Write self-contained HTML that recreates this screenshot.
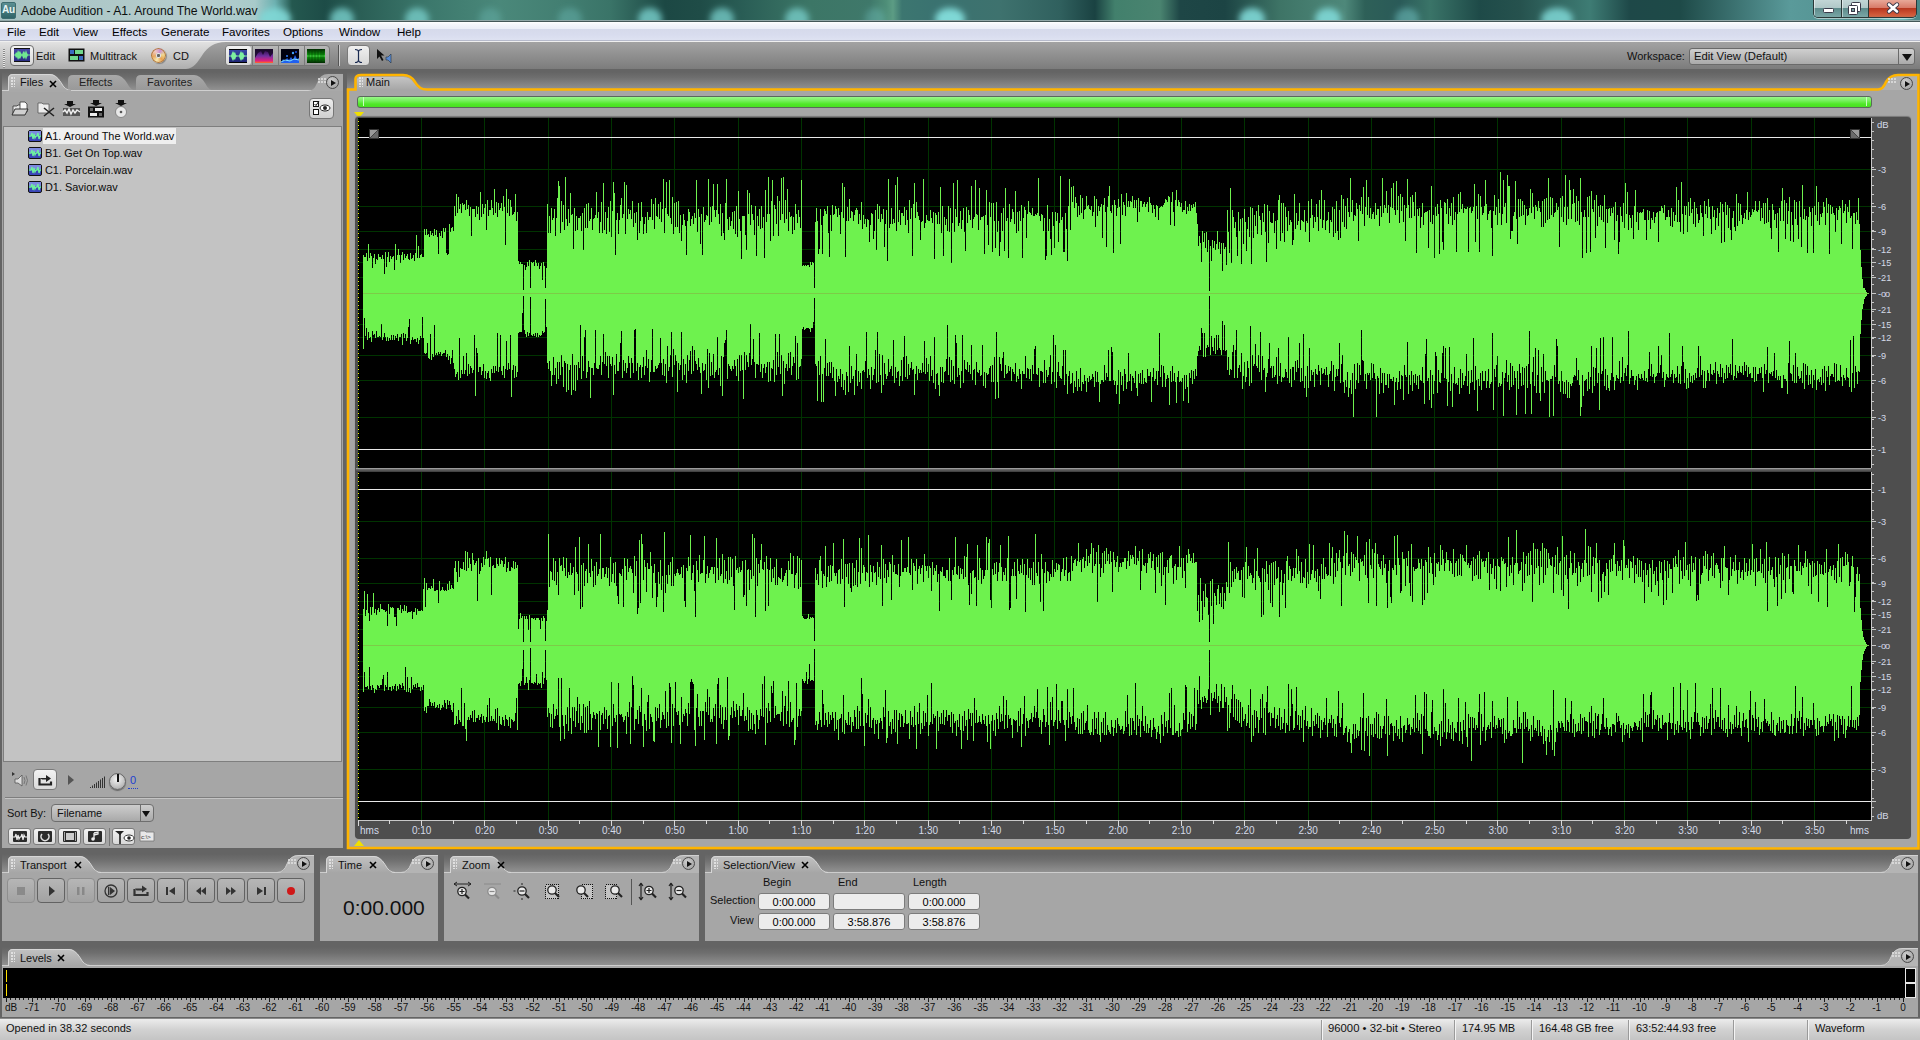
<!DOCTYPE html>
<html><head><meta charset="utf-8">
<style>
*{box-sizing:border-box;margin:0;padding:0}
html,body{width:1920px;height:1040px;overflow:hidden;background:#646464;font-family:"Liberation Sans",sans-serif;font-size:11px;color:#000}
.a{position:absolute}
.t{position:absolute;white-space:nowrap;line-height:1}
#title{left:0;top:0;width:1920px;height:22px;background:#2e6460;overflow:hidden}
#title:after{content:"";position:absolute;left:0;top:20px;width:1920px;height:2px;background:linear-gradient(#b8d0d0,#1e2e2e)}
#menubar{left:0;top:22px;width:1920px;height:19px;background:linear-gradient(#ffffff 0,#f4f5fa 15%,#eceef7 37%,#d6daeb 40%,#d8dcee 70%,#dee2f1 100%);border-bottom:1px solid #b6bacb}
#toolbar{left:0;top:41px;width:1920px;height:28px;background:linear-gradient(#d2d2d2 0,#bdbdbd 45%,#a2a2a2 100%)}
#hdrow1{left:0;top:69px;width:1920px;height:22px;background:linear-gradient(#5d5d5d 0,#6a6a6a 30%,#8c8c8c 100%)}
#hdrow2{left:0;top:849px;width:1920px;height:24px;background:linear-gradient(#636363 0,#656565 20%,#929292 100%)}
#hdrow3{left:0;top:941px;width:1920px;height:25px;background:linear-gradient(#636363 0,#656565 20%,#929292 100%)}
.panel{position:absolute;background:#a6a6a6;border-top:1px solid #cdcdcd}
.tab{position:absolute;height:17px;background:linear-gradient(#bcbcbc,#a8a8a8);border-radius:5px 10px 0 0}
.grip{position:absolute;width:4px;height:10px;background:radial-gradient(circle at 1px 1px,#e0e0e0 0.8px,transparent 1.2px) 0 0/3px 3px}
.x{position:absolute;font-size:10px;font-weight:bold}
.pmenu{position:absolute;width:13px;height:13px;border-radius:50%;border:1px solid #4a4a4a;background:radial-gradient(circle at 40% 35%,#d0d0d0,#9a9a9a)}
.pmenu:after{content:"";position:absolute;left:4px;top:2.5px;border-left:5px solid #111;border-top:3.5px solid transparent;border-bottom:3.5px solid transparent}
.btn{position:absolute;border:1px solid #6f6f6f;border-radius:4px;background:linear-gradient(#bdbdbd,#a3a3a3)}
.ibox{position:absolute;height:16px;background:#ececec;border:1px solid #7b7b7b;border-radius:3px;text-align:center;font-size:11px;line-height:14px}
</style></head><body>
<!-- TITLE -->
<div id="title" class="a">
<svg class="a" style="left:0;top:0" width="1920" height="22"><defs><linearGradient id="tbg" x1="0" y1="0" x2="1" y2="0"><stop offset="0.0000" stop-color="#a6c2c2"/><stop offset="0.1042" stop-color="#b6cece"/><stop offset="0.1328" stop-color="#a8caca"/><stop offset="0.1432" stop-color="#6cb0b0"/><stop offset="0.1521" stop-color="#24584f"/><stop offset="0.1693" stop-color="#1d4c47"/><stop offset="0.1875" stop-color="#2a5e55"/><stop offset="0.2240" stop-color="#3c786c"/><stop offset="0.2604" stop-color="#4a887a"/><stop offset="0.2917" stop-color="#437f72"/><stop offset="0.3177" stop-color="#3a7468"/><stop offset="0.3464" stop-color="#1c4844"/><stop offset="0.3646" stop-color="#1f4c47"/><stop offset="0.3880" stop-color="#2a5e56"/><stop offset="0.4219" stop-color="#3c7666"/><stop offset="0.4531" stop-color="#3f786a"/><stop offset="0.4615" stop-color="#4e8e78"/><stop offset="0.4651" stop-color="#5c9c84"/><stop offset="0.4698" stop-color="#3c7670"/><stop offset="0.4870" stop-color="#3a7270"/><stop offset="0.5208" stop-color="#3e726e"/><stop offset="0.5521" stop-color="#30605e"/><stop offset="0.5703" stop-color="#1a4242"/><stop offset="0.5807" stop-color="#42806c"/><stop offset="0.6042" stop-color="#4a8470"/><stop offset="0.6146" stop-color="#1e4646"/><stop offset="0.6380" stop-color="#1c4444"/><stop offset="0.6667" stop-color="#3e7466"/><stop offset="0.7005" stop-color="#4e887a"/><stop offset="0.7109" stop-color="#2e6058"/><stop offset="0.7292" stop-color="#2a5a58"/><stop offset="0.7448" stop-color="#3a7468"/><stop offset="0.7708" stop-color="#1e4a48"/><stop offset="0.7917" stop-color="#26524e"/><stop offset="0.8281" stop-color="#3e7c74"/><stop offset="0.8490" stop-color="#1e4848"/><stop offset="0.8750" stop-color="#1e4a48"/><stop offset="0.9323" stop-color="#5a9a9a"/><stop offset="1.0000" stop-color="#4a8888"/></linearGradient><filter id="tblur" x="-5%" y="-50%" width="110%" height="200%"><feGaussianBlur stdDeviation="3.2"/></filter></defs><rect width="1920" height="22" fill="url(#tbg)"/><g filter="url(#tblur)"><ellipse cx="275" cy="19" rx="16" ry="11" fill="#7fd8d6" opacity="0.9"/><ellipse cx="342" cy="19" rx="12" ry="11" fill="#7fd8d6" opacity="0.75"/><ellipse cx="417" cy="19" rx="12" ry="11" fill="#7fd8d6" opacity="0.7"/><ellipse cx="490" cy="19" rx="11" ry="11" fill="#7fd8d6" opacity="0.25"/><ellipse cx="570" cy="19" rx="12" ry="11" fill="#7fd8d6" opacity="0.3"/><ellipse cx="650" cy="19" rx="12" ry="11" fill="#7fd8d6" opacity="0.75"/><ellipse cx="722" cy="19" rx="12" ry="11" fill="#7fd8d6" opacity="0.7"/><ellipse cx="797" cy="19" rx="12" ry="11" fill="#7fd8d6" opacity="0.7"/><ellipse cx="875" cy="19" rx="10" ry="11" fill="#7fd8d6" opacity="0.3"/><ellipse cx="950" cy="19" rx="15" ry="11" fill="#7fd8d6" opacity="1.0"/><ellipse cx="1252" cy="19" rx="13" ry="11" fill="#7fd8d6" opacity="0.9"/><ellipse cx="1328" cy="19" rx="13" ry="11" fill="#7fd8d6" opacity="0.9"/><ellipse cx="1407" cy="19" rx="12" ry="11" fill="#7fd8d6" opacity="0.45"/><ellipse cx="1557" cy="19" rx="16" ry="11" fill="#7fd8d6" opacity="0.85"/><ellipse cx="1895" cy="19" rx="14" ry="11" fill="#7fd8d6" opacity="0.6"/></g></svg>
 <div class="a" style="left:1px;top:2px;width:15px;height:17px;background:linear-gradient(#5b8f92,#2f6468);border:1px solid #3d6c70;border-radius:2px"></div>
 <div class="t" style="left:2px;top:5px;font-size:10px;color:#e8f4f4;font-weight:bold;letter-spacing:-0.3px">Au</div>
 <div class="t" style="left:21px;top:5px;font-size:12.2px;color:#0c1010">Adobe Audition - A1. Around The World.wav</div>
 <div class="a" style="left:1813px;top:0;width:104px;height:18px;border:1px solid #2a3838;border-top:0;border-radius:0 0 5px 5px;overflow:hidden;box-shadow:0 1px 0 rgba(255,255,255,.5)">
  <div class="a" style="left:0;top:0;width:28px;height:17px;background:linear-gradient(#c2d6d6 0,#b0c8c8 45%,#5e8c8c 50%,#7aa6a6 100%);border-right:1px solid #2a3838;box-shadow:inset 1px 0 0 rgba(255,255,255,.5)"></div>
  <div class="a" style="left:28px;top:0;width:27px;height:17px;background:linear-gradient(#c2d6d6 0,#b0c8c8 45%,#5e8c8c 50%,#7aa6a6 100%);border-right:1px solid #2a3838;box-shadow:inset 1px 0 0 rgba(255,255,255,.5)"></div>
  <div class="a" style="left:55px;top:0;width:49px;height:17px;background:linear-gradient(#e8a898 0,#d87a68 45%,#b83820 50%,#d05838 85%,#c86848 100%)"></div>
  <svg class="a" style="left:0;top:0" width="104" height="17">
   <rect x="9.5" y="8.5" width="10" height="4" rx="1" fill="#fff" stroke="#3a3a4a"/>
   <rect x="37.5" y="2.5" width="9" height="9" rx="1" fill="#fff" stroke="#3a3a4a"/>
   <rect x="34.5" y="5.5" width="9" height="9" rx="1" fill="#fff" stroke="#3a3a4a"/>
   <rect x="37.5" y="8.5" width="3" height="3" fill="#7aa0a0" stroke="#3a3a4a"/>
   <path d="M75 4.5L83 11.5M83 4.5L75 11.5" stroke="#3a3a4a" stroke-width="4.4" stroke-linecap="round"/>
   <path d="M75 4.5L83 11.5M83 4.5L75 11.5" stroke="#fff" stroke-width="2.6" stroke-linecap="round"/>
  </svg>
 </div>
</div>
<!-- MENU -->
<div id="menubar" class="a">
 <div class="t" style="left:7px;top:4px;font-size:11.6px">File</div>
 <div class="t" style="left:39px;top:4px;font-size:11.6px">Edit</div>
 <div class="t" style="left:73px;top:4px;font-size:11.6px">View</div>
 <div class="t" style="left:112px;top:4px;font-size:11.6px">Effects</div>
 <div class="t" style="left:161px;top:4px;font-size:11.6px">Generate</div>
 <div class="t" style="left:222px;top:4px;font-size:11.6px">Favorites</div>
 <div class="t" style="left:283px;top:4px;font-size:11.6px">Options</div>
 <div class="t" style="left:339px;top:4px;font-size:11.6px">Window</div>
 <div class="t" style="left:397px;top:4px;font-size:11.6px">Help</div>
</div>
<!-- TOOLBAR -->
<div id="toolbar" class="a">
<svg class="a" style="left:0;top:0" width="1920" height="28"><defs><linearGradient id="tbl" x1="0" y1="0" x2="0" y2="1"><stop offset="0" stop-color="#e2e2e2"/><stop offset="1" stop-color="#aeaeae"/></linearGradient><linearGradient id="tbd" x1="0" y1="0" x2="0" y2="1"><stop offset="0" stop-color="#a4a4a4"/><stop offset="1" stop-color="#7c7c7c"/></linearGradient></defs><rect x="0" y="0" width="1920" height="28" fill="url(#tbd)"/><path d="M0 1H226C214 1 208 6 203 13C197 22 194 27 186 28H0Z" fill="url(#tbl)"/><rect x="0" y="0" width="1920" height="1" fill="#efefef"/></svg>
<div class="a" style="left:3px;top:8px;width:2px;height:19px;background:repeating-linear-gradient(#8a8a8a 0 1px,#e8e8e8 1px 2px)"></div>
<div class="a" style="left:10px;top:4px;width:24px;height:21px;border:1px solid #6d6d6d;border-radius:4px;background:linear-gradient(#f4f4f4,#d8d8d8)"></div>
<svg class="a" style="left:14px;top:7px" width="16" height="14" viewBox="0 0 16 14"><defs><linearGradient id="ed1" x1="0" y1="0" x2="0" y2="1"><stop offset="0" stop-color="#4a4aa8"/><stop offset="1" stop-color="#262a80"/></linearGradient></defs><rect width="16" height="14" fill="url(#ed1)"/><rect width="16" height="1" fill="#111"/><rect y="13" width="16" height="1" fill="#111"/><path d="M0 6.5H1L2 4L3 5L4 2L5 4L6 3L7 5L8 6.5L9 4L10 3L11 5L12 2L13 5L14 6.5H16V7.5H14L13 9L12 12L11 9L10 11L9 10L8 7.5L7 9L6 11L5 10L4 12L3 9L2 10L1 7.5H0Z" fill="#70e890"/></svg>
<div class="t" style="left:36px;top:10px;font-size:11px;color:#111;">Edit</div>
<svg class="a" style="left:68px;top:7px" width="17" height="14" viewBox="0 0 17 14"><rect x="0.5" y="0.5" width="16" height="13" fill="#111"/><rect x="2" y="2" width="4" height="4" fill="#3a6cc0"/><rect x="7" y="2" width="8" height="4" fill="#6fd88a"/><rect x="2" y="8" width="8" height="4" fill="#6fd88a"/><rect x="11" y="8" width="4" height="4" fill="#3a6cc0"/></svg>
<div class="t" style="left:90px;top:10px;font-size:11px;color:#111;">Multitrack</div>
<div class="a" style="left:151px;top:7px;width:15px;height:15px;border-radius:50%;background:radial-gradient(circle,#666 0 1.3px,#eee 1.8px,#ccc 2.6px,transparent 3px),conic-gradient(from 200deg,#f8e8b0,#e8a860,#f0c8c0,#c890d0,#f0d890,#e8a050,#f8e8b0);box-shadow:inset 0 0 0 1px #b07840,1px 1px 1px rgba(0,0,0,.3)"></div>
<div class="t" style="left:173px;top:10px;font-size:11px;color:#111;">CD</div>
<div class="a" style="left:225px;top:4px;width:105px;height:21px;border:1px solid #777;border-radius:4px;background:linear-gradient(#b8b8b8,#999)"></div>
<div class="a" style="left:226px;top:5px;width:25px;height:19px;border-radius:3px;background:linear-gradient(#f2f2f2,#d8d8d8)"></div>
<div class="a" style="left:252px;top:5px;width:1px;height:19px;background:#7a7a7a"></div>
<div class="a" style="left:278px;top:5px;width:1px;height:19px;background:#7a7a7a"></div>
<div class="a" style="left:304px;top:5px;width:1px;height:19px;background:#7a7a7a"></div>
<svg class="a" style="left:229px;top:8px" width="18" height="14" viewBox="0 0 18 14"><defs><linearGradient id="wv1" x1="0" y1="0" x2="0" y2="1"><stop offset="0" stop-color="#3a48a8"/><stop offset="1" stop-color="#1c2270"/></linearGradient></defs><rect x="0" y="0" width="18" height="14" fill="url(#wv1)"/><rect x="0" y="0" width="18" height="1" fill="#000"/><rect x="0" y="13" width="18" height="1" fill="#000"/><path d="M0 6.5H2L3 4L4 2L5 4L6 3L7 6L8 6.5H10L11 4L12 2L13 4L14 3L15 6L16 6.5H18V7.5H16L15 8L14 11L13 10L12 12L11 10L10 7.5H8L7 8L6 11L5 10L4 12L3 10L2 7.5H0Z" fill="#7ef0a0"/></svg>
<svg class="a" style="left:255px;top:8px" width="18" height="14"><defs><linearGradient id="sp1" x1="0" y1="0" x2="0" y2="1"><stop offset="0" stop-color="#200838"/><stop offset=".5" stop-color="#7030a0"/><stop offset=".85" stop-color="#e02080"/><stop offset="1" stop-color="#ff7020"/></linearGradient></defs><rect width="18" height="14" fill="url(#sp1)"/><path d="M0 0H18V4L15 8L13 3L10 2L8 6L6 2L3 4L0 9Z" fill="#180828" opacity=".85"/></svg>
<svg class="a" style="left:281px;top:8px" width="18" height="14"><rect width="18" height="14" fill="#000010"/><path d="M0 14L2 10L4 12L6 9L8 11L10 8L12 11L14 6L16 10L18 9V14Z" fill="#2060f0"/><circle cx="12" cy="4" r="1.2" fill="#40a0ff"/><circle cx="6" cy="7" r="1" fill="#3080ff"/><circle cx="15" cy="3" r="1" fill="#2050e0"/><path d="M0 13L4 11L9 12L13 10L18 11" stroke="#80e0ff" stroke-width="1" fill="none"/></svg>
<svg class="a" style="left:307px;top:8px" width="18" height="14"><defs><linearGradient id="ph1" x1="0" y1="0" x2="0" y2="1"><stop offset="0" stop-color="#002800"/><stop offset=".45" stop-color="#10a010"/><stop offset=".5" stop-color="#80ff80"/><stop offset=".55" stop-color="#10a010"/><stop offset="1" stop-color="#002800"/></linearGradient></defs><rect width="18" height="14" fill="url(#ph1)"/><path d="M2 1V13M5 2V12M8 0V14M11 2V12M14 1V13M16 3V11" stroke="#003000" stroke-width=".8" opacity=".6"/></svg>
<div class="a" style="left:338px;top:4px;width:1px;height:21px;background:#555;box-shadow:1px 0 0 #ccc"></div>
<div class="a" style="left:347px;top:4px;width:23px;height:21px;border:1px solid #7a7a7a;border-radius:4px;background:linear-gradient(#f0f0f0,#d6d6d6)"></div>
<svg class="a" style="left:352px;top:7px" width="13" height="16" viewBox="0 0 13 16"><path d="M3 1.5Q6.5 1.5 6.5 4V12Q6.5 14.5 3 14.5M10 1.5Q6.5 1.5 6.5 4V12Q6.5 14.5 10 14.5" stroke="#1a2a50" stroke-width="1.2" fill="none"/></svg>
<svg class="a" style="left:376px;top:7px" width="18" height="16" viewBox="0 0 18 16"><path d="M1 1L1 11L3.5 8.5L6 13L7.5 12L5 7.5H8.5Z" fill="#111"/><path d="M10 9H12L15 6V15L12 12H10Z" fill="#5a8ad0" stroke="#234" stroke-width="0.6"/></svg>
<div class="t" style="left:1627px;top:10px;font-size:11px;color:#111;">Workspace:</div>
<div class="a" style="left:1689px;top:7px;width:226px;height:17px;border:1px solid #6a6a6a;border-radius:3px;background:linear-gradient(#cfcfcf,#aaaaaa)"></div>
<div class="a" style="left:1898px;top:8px;width:1px;height:15px;background:#6a6a6a"></div>
<div class="a" style="left:1902px;top:13px;border-top:7px solid #111;border-left:5px solid transparent;border-right:5px solid transparent"></div>
<div class="t" style="left:1694px;top:10px;font-size:11.3px;color:#111;">Edit View (Default)</div>
</div>
<div class="a" style="left:2px;top:72px;width:341px;height:19px;background:linear-gradient(#646464 0,#6e6e6e 30%,#949494 100%)"></div>
<div class="a" style="left:347px;top:72px;width:1571px;height:18px;background:linear-gradient(#646464 0,#6e6e6e 30%,#949494 100%)"></div>
<div class="a" style="left:2px;top:854px;width:312px;height:19px;background:linear-gradient(#646464 0,#6e6e6e 30%,#949494 100%)"></div>
<div class="a" style="left:320px;top:854px;width:118px;height:19px;background:linear-gradient(#646464 0,#6e6e6e 30%,#949494 100%)"></div>
<div class="a" style="left:444px;top:854px;width:255px;height:19px;background:linear-gradient(#646464 0,#6e6e6e 30%,#949494 100%)"></div>
<div class="a" style="left:705px;top:854px;width:1213px;height:19px;background:linear-gradient(#646464 0,#6e6e6e 30%,#949494 100%)"></div>
<div class="a" style="left:2px;top:947px;width:1916px;height:19px;background:linear-gradient(#646464 0,#6e6e6e 30%,#949494 100%)"></div>
<div class="panel" style="left:2px;top:90px;width:341px;height:758px"></div>
<svg class="a" style="left:136px;top:75px" width="80" height="16"><defs><linearGradient id="tg136_75" x1="0" y1="0" x2="0" y2="1"><stop offset="0" stop-color="#a8a8a8"/><stop offset="1" stop-color="#989898"/></linearGradient></defs><path d="M0 16V5Q0 0 5 0H58Q64 0 69 8.0Q73 16 79 16Z" fill="url(#tg136_75)"/></svg>
<svg class="a" style="left:68px;top:75px" width="70" height="16"><defs><linearGradient id="tg68_75" x1="0" y1="0" x2="0" y2="1"><stop offset="0" stop-color="#a8a8a8"/><stop offset="1" stop-color="#989898"/></linearGradient></defs><path d="M0 16V5Q0 0 5 0H48Q54 0 59 8.0Q63 16 69 16Z" fill="url(#tg68_75)"/></svg>
<svg class="a" style="left:8px;top:74px" width="64" height="17"><defs><linearGradient id="tg8_74" x1="0" y1="0" x2="0" y2="1"><stop offset="0" stop-color="#c2c2c2"/><stop offset="1" stop-color="#a6a6a6"/></linearGradient></defs><path d="M0 17V5Q0 0 5 0H42Q48 0 53 8.5Q57 17 63 17Z" fill="url(#tg8_74)"/><path d="M0.5 17V5Q0.5 0.5 5 0.5H42Q48 0.5 53 8.5Q57 16.5 63 16.5" stroke="#d6d6d6" stroke-width="1" fill="none"/></svg>
<div class="a" style="left:2px;top:90px;width:341px;height:1px;background:#d0d0d0"></div>
<div class="a" style="left:9px;top:90px;width:62px;height:2px;background:#a8a8a8"></div>
<div class="grip" style="left:11px;top:77px"></div>
<div class="t" style="left:20px;top:77px;font-size:11px;color:#111;">Files</div>
<svg class="a" style="left:49px;top:80px" width="8" height="8"><path d="M1 1L7 7M7 1L1 7" stroke="#000" stroke-width="1.6"/></svg>
<div class="t" style="left:79px;top:77px;font-size:11px;color:#222;">Effects</div>
<div class="t" style="left:147px;top:77px;font-size:11px;color:#222;">Favorites</div>
<svg class="a" style="left:308px;top:74px" width="35" height="17"><path d="M0 17Q6 17 9 9Q12 0 20 0H35V17Z" fill="#a8a8a8"/></svg>
<div class="grip" style="left:318px;top:78px;width:8px;height:6px;opacity:.8"></div>
<div class="pmenu" style="left:326px;top:76px"></div>
<svg class="a" style="left:11px;top:100px" width="120" height="19"><path d="M2 14V6H6L7 5H12V14Z" fill="#e4e4e4" stroke="#333" stroke-width="0.8"/><path d="M9 2H14L16 4V12H9Z" fill="#fafafa" stroke="#333" stroke-width="0.8"/><path d="M1 15L4 9H17L14 15Z" fill="#d0d0d0" stroke="#222" stroke-width="0.9"/><path d="M27 13V3H31L32 4H38V13Z" fill="#ececec" stroke="#555" stroke-width="0.8"/><path d="M33 8L43 16M43 8L33 16" stroke="#222" stroke-width="1.6"/><path d="M56 1H62V4H65L59 7L53 4H56Z" fill="#111"/><rect x="52" y="8" width="17" height="8" fill="#555"/><path d="M52 12L54 10L56 13L58 9L60 14L62 10L64 13L66 10L69 12" stroke="#f0f0f0" stroke-width="1.5" fill="none"/><path d="M82 0H88V3H91L85 6L79 3H82Z" fill="#111"/><rect x="77" y="6.5" width="16" height="11" fill="#111"/><rect x="79" y="8" width="3" height="3" fill="#666"/><rect x="84" y="8" width="7" height="3" fill="#eee"/><rect x="79" y="13" width="7" height="3" fill="#eee"/><rect x="88" y="13" width="3" height="3" fill="#666"/><path d="M107 0H113V3H116L110 6L104 3H107Z" fill="#111"/><circle cx="110" cy="12" r="5.5" fill="#e8e8e8" stroke="#777" stroke-width="0.8"/><circle cx="110" cy="12" r="1.3" fill="#555"/></svg>
<div class="a" style="left:309px;top:98px;width:25px;height:21px;border:1px solid #777;border-radius:4px;background:linear-gradient(#ededed,#cfcfcf)"></div>
<svg class="a" style="left:312px;top:100px" width="20" height="17"><rect x="1.5" y="1.5" width="5" height="5" fill="#fff" stroke="#111"/><path d="M2.5 4L4 5.5L7 1" stroke="#111" fill="none"/><rect x="1.5" y="9.5" width="5" height="5" fill="#fff" stroke="#111"/><ellipse cx="13" cy="8" rx="5" ry="3" fill="#fff" stroke="#222"/><circle cx="13" cy="8" r="2" fill="#222"/></svg>
<div class="a" style="left:3px;top:126px;width:339px;height:636px;background:#c3c3c3;border:1px solid #7e7e7e"></div>
<div class="a" style="left:43px;top:128px;width:133px;height:16px;background:#efefef"></div>
<svg class="a" style="left:28px;top:130px" width="14" height="12" viewBox="0 0 14 12"><rect x="0.5" y="0.5" width="13" height="11" rx="1.5" fill="#3b46b8" stroke="#111"/><rect x="1" y="1" width="12" height="4" fill="#7c88e0"/><path d="M1 6H3L4 3L5 9L6 4L7 8L8 6H9L10 3L11 9L12 6H13" stroke="#6ef0a0" stroke-width="1.3" fill="none"/></svg>
<div class="t" style="left:45px;top:131px;font-size:10.9px;color:#0a0a0a;">A1. Around The World.wav</div>
<svg class="a" style="left:28px;top:147px" width="14" height="12" viewBox="0 0 14 12"><rect x="0.5" y="0.5" width="13" height="11" rx="1.5" fill="#3b46b8" stroke="#111"/><rect x="1" y="1" width="12" height="4" fill="#7c88e0"/><path d="M1 6H3L4 3L5 9L6 4L7 8L8 6H9L10 3L11 9L12 6H13" stroke="#6ef0a0" stroke-width="1.3" fill="none"/></svg>
<div class="t" style="left:45px;top:148px;font-size:10.9px;color:#0a0a0a;">B1. Get On Top.wav</div>
<svg class="a" style="left:28px;top:164px" width="14" height="12" viewBox="0 0 14 12"><rect x="0.5" y="0.5" width="13" height="11" rx="1.5" fill="#3b46b8" stroke="#111"/><rect x="1" y="1" width="12" height="4" fill="#7c88e0"/><path d="M1 6H3L4 3L5 9L6 4L7 8L8 6H9L10 3L11 9L12 6H13" stroke="#6ef0a0" stroke-width="1.3" fill="none"/></svg>
<div class="t" style="left:45px;top:165px;font-size:10.9px;color:#0a0a0a;">C1. Porcelain.wav</div>
<svg class="a" style="left:28px;top:181px" width="14" height="12" viewBox="0 0 14 12"><rect x="0.5" y="0.5" width="13" height="11" rx="1.5" fill="#3b46b8" stroke="#111"/><rect x="1" y="1" width="12" height="4" fill="#7c88e0"/><path d="M1 6H3L4 3L5 9L6 4L7 8L8 6H9L10 3L11 9L12 6H13" stroke="#6ef0a0" stroke-width="1.3" fill="none"/></svg>
<div class="t" style="left:45px;top:182px;font-size:10.9px;color:#0a0a0a;">D1. Savior.wav</div>
<svg class="a" style="left:11px;top:771px" width="20" height="17"><path d="M1 1L4 3L1 5Z" fill="#333"/><path d="M4 8H7L11 4V15L7 12H4Z" fill="#ddd" stroke="#555" stroke-width="0.8"/><path d="M13 6Q15 9.5 13 13M15 4.5Q18 9.5 15 14.5" stroke="#777" fill="none"/></svg>
<div class="a" style="left:33px;top:769px;width:24px;height:21px;border:1px solid #7a7a7a;border-radius:4px;background:linear-gradient(#f2f2f2,#dadada)"></div>
<svg class="a" style="left:38px;top:772px" width="15" height="14"><path d="M1.5 6V12.5H13V9.5" stroke="#222" stroke-width="2.2" fill="none"/><path d="M2 6H8V3L13 6.5L8 10V7.5H4" fill="#222"/></svg>
<div class="a" style="left:68px;top:775px;border-left:6px solid #555;border-top:5px solid transparent;border-bottom:5px solid transparent"></div>
<svg class="a" style="left:89px;top:774px" width="16" height="15"><rect x="1" y="13.0" width="1" height="1.0" fill="#333"/><rect x="3" y="11.5" width="1" height="2.5" fill="#333"/><rect x="5" y="10.0" width="1" height="4.0" fill="#333"/><rect x="7" y="8.5" width="1" height="5.5" fill="#333"/><rect x="9" y="7.0" width="1" height="7.0" fill="#333"/><rect x="11" y="5.5" width="1" height="8.5" fill="#333"/><rect x="13" y="4.0" width="1" height="10.0" fill="#333"/><rect x="15" y="2.5" width="1" height="11.5" fill="#333"/></svg>
<div class="a" style="left:109px;top:773px;width:17px;height:17px;border-radius:50%;border:1px solid #666;background:radial-gradient(circle at 45% 35%,#f4f4f4,#b8b8b8 70%,#888);box-shadow:0 1px 1px #666"></div>
<div class="a" style="left:117px;top:774px;width:1.5px;height:8px;background:#111"></div>
<div class="t" style="left:130px;top:775px;font-size:11px;color:#2040d0;">0</div>
<div class="a" style="left:128px;top:788px;width:10px;height:1px;border-top:1px dotted #2040d0"></div>
<div class="a" style="left:5px;top:797px;width:338px;height:1px;background:#7e7e7e;box-shadow:0 1px 0 #c4c4c4"></div>
<div class="t" style="left:7px;top:808px;font-size:11px;color:#111;">Sort By:</div>
<div class="a" style="left:51px;top:804px;width:103px;height:18px;border:1px solid #6e6e6e;border-radius:4px;background:linear-gradient(#cdcdcd,#a9a9a9)"></div>
<div class="a" style="left:140px;top:805px;width:1px;height:16px;background:#6e6e6e"></div>
<div class="a" style="left:142px;top:811px;border-top:6px solid #111;border-left:4px solid transparent;border-right:4px solid transparent"></div>
<div class="t" style="left:57px;top:808px;font-size:11px;color:#111;">Filename</div>
<div class="a" style="left:8px;top:828px;width:23px;height:17px;border:1px solid #7a7a7a;border-radius:3px;background:linear-gradient(#f2f2f2,#d8d8d8)"></div>
<div class="a" style="left:13px;top:831px;width:14px;height:11px;background:#2a2a2a;border-radius:1px"></div>
<div class="a" style="left:33px;top:828px;width:23px;height:17px;border:1px solid #7a7a7a;border-radius:3px;background:linear-gradient(#f2f2f2,#d8d8d8)"></div>
<div class="a" style="left:38px;top:831px;width:14px;height:11px;background:#2a2a2a;border-radius:1px"></div>
<div class="a" style="left:58px;top:828px;width:23px;height:17px;border:1px solid #7a7a7a;border-radius:3px;background:linear-gradient(#f2f2f2,#d8d8d8)"></div>
<div class="a" style="left:63px;top:831px;width:14px;height:11px;background:#2a2a2a;border-radius:1px"></div>
<div class="a" style="left:83px;top:828px;width:23px;height:17px;border:1px solid #7a7a7a;border-radius:3px;background:linear-gradient(#f2f2f2,#d8d8d8)"></div>
<div class="a" style="left:88px;top:831px;width:14px;height:11px;background:#2a2a2a;border-radius:1px"></div>
<svg class="a" style="left:13px;top:831px" width="14" height="11"><path d="M0 6H2L3 3L4 9L5 4L6 8L7 6H8L9 3L10 9L11 4L12 6H14" stroke="#eee" stroke-width="1.2" fill="none"/></svg>
<svg class="a" style="left:38px;top:831px" width="14" height="11"><path d="M4 3A4 4 0 1 0 10 3" stroke="#ddd" stroke-width="1.6" fill="none"/></svg>
<svg class="a" style="left:63px;top:831px" width="14" height="11"><rect x="3" y="2" width="8" height="7" fill="#ccc"/><rect x="1" y="1" width="1" height="9" fill="#aaa"/><rect x="12" y="1" width="1" height="9" fill="#aaa"/></svg>
<svg class="a" style="left:88px;top:831px" width="14" height="11"><path d="M6 2V8M6 2L10 1V3L6 4" stroke="#eee" stroke-width="1.3" fill="none"/><circle cx="5" cy="8" r="1.8" fill="#eee"/></svg>
<div class="a" style="left:109px;top:828px;width:1px;height:18px;background:#777"></div>
<div class="a" style="left:112px;top:828px;width:23px;height:17px;border:1px solid #7a7a7a;border-radius:3px;background:linear-gradient(#f2f2f2,#d8d8d8)"></div>
<svg class="a" style="left:113px;top:829px" width="22" height="16"><path d="M2 2H11L7 6Z" fill="#222"/><path d="M7 5V15" stroke="#111" stroke-width="1.5"/><ellipse cx="16" cy="9" rx="5" ry="3" fill="#fff" stroke="#333"/><circle cx="16" cy="9" r="1.8" fill="#222"/></svg>
<svg class="a" style="left:139px;top:828px" width="17" height="15"><path d="M1 3H6L7 4H15V13H1Z" fill="#e8e8e8" stroke="#777" stroke-width="0.8"/><text x="2" y="11" font-size="6" font-family="Liberation Sans" fill="#333">c:\&gt;</text></svg>
<svg class="a" style="left:345px;top:72px" width="1575" height="780"><defs><linearGradient id="mtab" x1="0" y1="0" x2="0" y2="1"><stop offset="0" stop-color="#c4c4c4"/><stop offset="1" stop-color="#a6a6a6"/></linearGradient></defs><path d="M3 18H10V7Q10 3 16 3H58Q66 3 70 10Q74 18 82 18H1533Q1538 18 1541 11Q1545 3 1553 3H1573V776H3Z" fill="#a6a6a6"/><path d="M12 18V8Q12 5 17 5H58Q65 5 69 11Q73 18 82 18Z" fill="url(#mtab)"/><path d="M1533 18Q1538 18 1541 11Q1545 4 1553 4H1572V18Z" fill="#b0b0b0"/><path d="M3 776V17.5H10.5V7Q10.5 3 16 3H58Q66 3 70 10Q74 17.5 82 17.5H1533Q1538 17.5 1541 10Q1545 3 1553 3H1573.5V776.5Z" fill="none" stroke="#ffb400" stroke-width="2.6"/></svg>
<div class="grip" style="left:359px;top:77px"></div>
<div class="t" style="left:366px;top:77px;font-size:11px;color:#111;">Main</div>
<div class="grip" style="left:1888px;top:78px;width:8px;height:6px;opacity:.8"></div>
<div class="pmenu" style="left:1900px;top:77px"></div>
<div class="a" style="left:357px;top:96px;width:1515px;height:12px;border:1px solid #5a6a5a;border-radius:3px;background:linear-gradient(#98f888 0,#78f060 35%,#50e828 70%,#48e020 100%)"></div>
<div class="a" style="left:363px;top:97px;width:1px;height:9px;background:#c8ffc0"></div>
<div class="a" style="left:1866px;top:97px;width:1px;height:9px;background:#c8ffc0"></div>
<div class="a" style="left:354px;top:112px;border-top:6px solid #f0e000;border-left:5px solid transparent;border-right:5px solid transparent"></div>
<div class="a" style="left:354px;top:840px;border-bottom:6px solid #f0e000;border-left:5px solid transparent;border-right:5px solid transparent"></div>
<div class="a" style="left:355px;top:117px;width:1556px;height:722px;background:#4e4e4e;border-radius:4px;box-shadow:0 -1px 1px #777"></div>
<div class="a" style="left:358px;top:118px;width:1513px;height:350px;background:#000"></div>
<div class="a" style="left:358px;top:472px;width:1513px;height:348px;background:#000"></div>
<div class="a" style="left:356px;top:468px;width:1515px;height:1px;background:#9a9a9a"></div>
<div class="a" style="left:356px;top:469px;width:1515px;height:3px;background:linear-gradient(#707070,#3a3a3a)"></div>
<svg class="a" style="left:0;top:0" width="1920" height="1040" shape-rendering="crispEdges"><path d="M358 169.5H1871M358 206.5H1871M358 231.5H1871M358 249.5H1871M358 262.5H1871M358 277.5H1871M358 309.5H1871M358 324.5H1871M358 337.5H1871M358 355.5H1871M358 380.5H1871M358 417.5H1871M358 521.5H1871M358 558.5H1871M358 583.5H1871M358 601.5H1871M358 614.5H1871M358 629.5H1871M358 661.5H1871M358 676.5H1871M358 689.5H1871M358 707.5H1871M358 732.5H1871M358 769.5H1871M421.5 118V468M421.5 472V820M484.5 118V468M484.5 472V820M548.5 118V468M548.5 472V820M611.5 118V468M611.5 472V820M674.5 118V468M674.5 472V820M738.5 118V468M738.5 472V820M801.5 118V468M801.5 472V820M864.5 118V468M864.5 472V820M928.5 118V468M928.5 472V820M991.5 118V468M991.5 472V820M1054.5 118V468M1054.5 472V820M1118.5 118V468M1118.5 472V820M1181.5 118V468M1181.5 472V820M1244.5 118V468M1244.5 472V820M1308.5 118V468M1308.5 472V820M1371.5 118V468M1371.5 472V820M1434.5 118V468M1434.5 472V820M1497.5 118V468M1497.5 472V820M1561.5 118V468M1561.5 472V820M1624.5 118V468M1624.5 472V820M1687.5 118V468M1687.5 472V820M1751.5 118V468M1751.5 472V820M1814.5 118V468M1814.5 472V820" stroke="#003300" stroke-width="1" fill="none"/><path d="M363.5 255V349M364.5 257V318M365.5 257V336M366.5 253V328M367.5 261V340M368.5 244V332M369.5 258V338M370.5 253V337M371.5 256V342M372.5 268V331M373.5 258V335M374.5 254V334M375.5 264V338M376.5 259V331M377.5 260V337M378.5 254V337M379.5 257V336M380.5 257V337M381.5 259V324M382.5 255V340M383.5 259V337M384.5 274V333M385.5 252V337M386.5 267V341M387.5 257V337M388.5 252V341M389.5 262V338M390.5 256V340M391.5 259V335M392.5 257V340M393.5 256V335M394.5 270V340M395.5 244V336M396.5 260V338M397.5 255V334M398.5 249V341M399.5 255V337M400.5 263V337M401.5 255V334M402.5 252V345M403.5 260V333M404.5 254V338M405.5 258V334M406.5 256V341M407.5 254V338M408.5 259V327M409.5 260V319M410.5 253V344M411.5 259V340M412.5 258V337M413.5 255V340M414.5 261V339M415.5 253V339M416.5 235V342M417.5 258V338M418.5 246V344M419.5 258V340M420.5 255V336M421.5 254V338M422.5 257V317M423.5 257V338M424.5 229V353M425.5 235V354M426.5 229V353M427.5 235V343M428.5 234V358M429.5 237V359M430.5 231V334M431.5 235V360M432.5 233V354M433.5 236V357M434.5 229V325M435.5 235V355M436.5 230V353M437.5 237V355M438.5 254V352M439.5 233V354M440.5 236V352M441.5 231V356M442.5 238V354M443.5 228V353M444.5 232V353M445.5 228V350M446.5 253V357M447.5 255V354M448.5 254V360M449.5 224V356M450.5 232V364M451.5 228V358M452.5 227V350M453.5 231V363M454.5 206V369M455.5 216V377M456.5 194V374M457.5 213V372M458.5 197V380M459.5 209V338M460.5 204V378M461.5 213V370M462.5 203V374M463.5 205V356M464.5 204V374M465.5 210V370M466.5 200V353M467.5 209V376M468.5 205V364M469.5 216V374M470.5 207V366M471.5 236V368M472.5 209V373M473.5 209V370M474.5 209V335M475.5 217V396M476.5 206V348M477.5 214V353M478.5 207V372M479.5 220V367M480.5 192V367M481.5 217V375M482.5 204V371M483.5 214V364M484.5 208V378M485.5 204V371M486.5 230V379M487.5 200V373M488.5 216V371M489.5 210V378M490.5 210V381M491.5 200V369M492.5 208V373M493.5 215V366M494.5 189V373M495.5 213V366M496.5 202V371M497.5 217V333M498.5 203V372M499.5 210V367M500.5 208V335M501.5 203V371M502.5 211V375M503.5 196V366M504.5 207V378M505.5 245V369M506.5 189V341M507.5 213V370M508.5 199V363M509.5 216V369M510.5 200V335M511.5 207V397M512.5 215V370M513.5 214V365M514.5 212V378M515.5 194V366M516.5 221V377M517.5 212V372M518.5 261V333M519.5 264V332M520.5 262V332M521.5 264V332M522.5 264V313M523.5 290V296M524.5 265V330M525.5 270V334M526.5 267V337M527.5 262V332M528.5 266V336M529.5 260V333M530.5 288V297M531.5 262V335M532.5 263V336M533.5 262V334M534.5 266V336M535.5 260V333M536.5 263V337M537.5 266V333M538.5 263V337M539.5 269V335M540.5 266V336M541.5 263V335M542.5 280V331M543.5 262V333M544.5 266V332M545.5 288V299M546.5 268V327M547.5 204V363M548.5 233V369M549.5 216V361M550.5 233V371M551.5 208V386M552.5 220V375M553.5 218V357M554.5 209V375M555.5 236V368M556.5 218V384M557.5 198V362M558.5 181V379M559.5 186V362M560.5 233V375M561.5 201V355M562.5 222V367M563.5 205V387M564.5 230V361M565.5 177V363M566.5 219V392M567.5 226V364M568.5 209V390M569.5 223V370M570.5 193V365M571.5 215V395M572.5 214V354M573.5 249V390M574.5 208V365M575.5 231V391M576.5 216V365M577.5 230V380M578.5 218V362M579.5 218V368M580.5 216V325M581.5 231V379M582.5 213V356M583.5 250V371M584.5 208V337M585.5 228V330M586.5 204V378M587.5 228V372M588.5 203V361M589.5 221V367M590.5 219V398M591.5 208V368M592.5 230V368M593.5 219V375M594.5 218V363M595.5 215V330M596.5 192V368M597.5 218V369M598.5 212V369M599.5 233V365M600.5 222V356M601.5 202V375M602.5 233V362M603.5 183V334M604.5 230V364M605.5 212V352M606.5 234V366M607.5 218V356M608.5 207V378M609.5 232V356M610.5 201V364M611.5 237V366M612.5 211V357M613.5 182V395M614.5 193V365M615.5 255V374M616.5 220V354M617.5 213V371M618.5 234V371M619.5 220V362M620.5 205V343M621.5 198V331M622.5 218V378M623.5 214V360M624.5 182V371M625.5 234V363M626.5 185V373M627.5 219V368M628.5 209V356M629.5 214V363M630.5 210V378M631.5 219V358M632.5 201V363M633.5 227V373M634.5 213V330M635.5 223V329M636.5 212V371M637.5 240V363M638.5 203V380M639.5 233V367M640.5 221V365M641.5 202V378M642.5 217V367M643.5 234V357M644.5 224V375M645.5 217V366M646.5 233V350M647.5 212V368M648.5 220V359M649.5 217V382M650.5 217V372M651.5 199V360M652.5 220V329M653.5 204V372M654.5 229V372M655.5 198V366M656.5 216V369M657.5 217V368M658.5 204V365M659.5 219V363M660.5 202V338M661.5 222V363M662.5 209V375M663.5 179V359M664.5 233V376M665.5 208V364M666.5 182V383M667.5 214V346M668.5 216V371M669.5 180V367M670.5 218V355M671.5 224V332M672.5 197V377M673.5 234V349M674.5 203V365M675.5 227V355M676.5 202V361M677.5 227V392M678.5 201V363M679.5 233V370M680.5 215V365M681.5 241V332M682.5 225V380M683.5 214V359M684.5 220V375M685.5 226V364M686.5 255V383M687.5 221V355M688.5 209V371M689.5 212V360M690.5 226V351M691.5 219V374M692.5 216V346M693.5 224V371M694.5 213V350M695.5 218V361M696.5 180V364M697.5 232V370M698.5 209V358M699.5 217V367M700.5 244V373M701.5 214V394M702.5 255V363M703.5 207V371M704.5 222V370M705.5 220V364M706.5 215V380M707.5 216V349M708.5 179V388M709.5 225V353M710.5 207V376M711.5 222V362M712.5 206V375M713.5 184V354M714.5 210V378M715.5 217V372M716.5 210V370M717.5 184V337M718.5 214V375M719.5 224V368M720.5 204V386M721.5 236V356M722.5 213V396M723.5 233V357M724.5 240V343M725.5 203V340M726.5 179V330M727.5 219V379M728.5 230V364M729.5 217V366M730.5 226V369M731.5 221V371M732.5 212V366M733.5 229V369M734.5 211V360M735.5 234V366M736.5 206V376M737.5 237V359M738.5 191V381M739.5 219V355M740.5 231V371M741.5 259V355M742.5 216V370M743.5 216V399M744.5 216V352M745.5 235V370M746.5 250V355M747.5 190V362M748.5 214V367M749.5 193V353M750.5 225V324M751.5 205V365M752.5 214V359M753.5 220V339M754.5 235V362M755.5 206V378M756.5 256V364M757.5 216V364M758.5 226V365M759.5 209V333M760.5 229V372M761.5 206V364M762.5 228V378M763.5 217V368M764.5 258V364M765.5 190V373M766.5 222V367M767.5 214V362M768.5 177V382M769.5 214V362M770.5 241V381M771.5 201V368M772.5 180V369M773.5 236V360M774.5 205V382M775.5 209V334M776.5 224V375M777.5 196V352M778.5 236V367M779.5 201V334M780.5 220V374M781.5 178V355M782.5 214V396M783.5 177V361M784.5 223V384M785.5 200V368M786.5 219V364M787.5 189V371M788.5 231V353M789.5 212V368M790.5 217V352M791.5 216V375M792.5 234V366M793.5 217V357M794.5 230V363M795.5 204V336M796.5 214V380M797.5 223V343M798.5 210V379M799.5 217V367M800.5 228V366M801.5 180V359M802.5 266V329M803.5 265V327M804.5 266V330M805.5 265V329M806.5 266V328M807.5 265V328M808.5 265V328M809.5 267V329M810.5 262V332M811.5 265V328M812.5 262V328M813.5 263V322M814.5 288V298M815.5 222V364M816.5 208V366M817.5 221V401M818.5 254V361M819.5 249V375M820.5 209V356M821.5 225V402M822.5 254V374M823.5 216V402M824.5 209V368M825.5 211V339M826.5 214V376M827.5 206V363M828.5 233V376M829.5 257V362M830.5 215V373M831.5 231V362M832.5 205V378M833.5 215V367M834.5 214V381M835.5 206V396M836.5 209V369M837.5 217V382M838.5 208V376M839.5 215V379M840.5 234V369M841.5 212V387M842.5 183V374M843.5 218V390M844.5 187V380M845.5 257V395M846.5 221V372M847.5 207V376M848.5 221V392M849.5 199V346M850.5 218V383M851.5 211V366M852.5 212V379M853.5 221V376M854.5 215V395M855.5 210V370M856.5 208V354M857.5 210V386M858.5 224V371M859.5 214V382M860.5 220V373M861.5 202V389M862.5 229V371M863.5 215V370M864.5 224V372M865.5 219V361M866.5 227V332M867.5 219V378M868.5 220V369M869.5 242V375M870.5 225V389M871.5 213V367M872.5 214V380M873.5 239V375M874.5 231V369M875.5 210V350M876.5 250V383M877.5 204V332M878.5 219V382M879.5 206V354M880.5 222V375M881.5 214V393M882.5 219V355M883.5 209V385M884.5 247V363M885.5 224V374M886.5 210V379M887.5 261V376M888.5 179V359M889.5 228V372M890.5 224V369M891.5 208V366M892.5 224V376M893.5 219V340M894.5 223V383M895.5 185V367M896.5 231V378M897.5 177V372M898.5 222V371M899.5 210V386M900.5 225V376M901.5 213V360M902.5 213V381M903.5 216V357M904.5 207V336M905.5 225V377M906.5 210V356M907.5 220V379M908.5 233V364M909.5 200V375M910.5 219V368M911.5 208V362M912.5 256V370M913.5 204V369M914.5 183V395M915.5 218V374M916.5 202V366M917.5 212V380M918.5 216V369M919.5 220V373M920.5 240V370M921.5 222V373M922.5 221V363M923.5 179V372M924.5 228V341M925.5 223V374M926.5 215V358M927.5 220V372M928.5 221V364M929.5 221V381M930.5 210V356M931.5 218V376M932.5 223V370M933.5 212V383M934.5 259V337M935.5 213V389M936.5 215V374M937.5 224V373M938.5 212V385M939.5 224V396M940.5 187V367M941.5 233V382M942.5 206V367M943.5 256V383M944.5 217V372M945.5 225V371M946.5 219V359M947.5 231V325M948.5 206V375M949.5 232V357M950.5 208V382M951.5 263V360M952.5 223V380M953.5 183V366M954.5 232V384M955.5 209V335M956.5 217V343M957.5 180V377M958.5 226V368M959.5 223V375M960.5 211V388M961.5 229V371M962.5 220V335M963.5 208V383M964.5 232V360M965.5 251V369M966.5 207V370M967.5 223V362M968.5 210V372M969.5 215V365M970.5 220V374M971.5 186V345M972.5 228V380M973.5 219V370M974.5 217V369M975.5 180V385M976.5 214V362M977.5 215V372M978.5 230V373M979.5 188V370M980.5 220V376M981.5 217V375M982.5 217V345M983.5 216V386M984.5 254V372M985.5 215V388M986.5 190V373M987.5 225V375M988.5 245V374M989.5 202V368M990.5 217V366M991.5 203V382M992.5 252V365M993.5 203V382M994.5 221V357M995.5 248V399M996.5 202V332M997.5 232V382M998.5 221V398M999.5 256V357M1000.5 242V364M1001.5 213V371M1002.5 231V358M1003.5 208V352M1004.5 251V378M1005.5 188V365M1006.5 221V374M1007.5 218V373M1008.5 258V366M1009.5 204V371M1010.5 222V367M1011.5 219V381M1012.5 209V369M1013.5 212V372M1014.5 224V374M1015.5 191V363M1016.5 233V382M1017.5 212V376M1018.5 231V379M1019.5 211V369M1020.5 221V374M1021.5 205V389M1022.5 258V371M1023.5 218V374M1024.5 207V374M1025.5 210V356M1026.5 238V378M1027.5 214V368M1028.5 201V369M1029.5 212V379M1030.5 213V369M1031.5 215V381M1032.5 208V365M1033.5 216V374M1034.5 216V349M1035.5 214V346M1036.5 215V374M1037.5 213V375M1038.5 178V368M1039.5 216V387M1040.5 221V371M1041.5 214V371M1042.5 215V372M1043.5 231V383M1044.5 218V360M1045.5 260V383M1046.5 256V370M1047.5 205V377M1048.5 231V375M1049.5 219V367M1050.5 239V355M1051.5 255V384M1052.5 212V372M1053.5 226V335M1054.5 248V382M1055.5 212V345M1056.5 221V388M1057.5 213V372M1058.5 242V362M1059.5 223V376M1060.5 176V378M1061.5 220V379M1062.5 217V366M1063.5 252V350M1064.5 252V385M1065.5 213V350M1066.5 229V374M1067.5 261V394M1068.5 206V376M1069.5 179V371M1070.5 230V384M1071.5 187V383M1072.5 202V373M1073.5 186V393M1074.5 208V381M1075.5 197V387M1076.5 203V371M1077.5 217V391M1078.5 206V379M1079.5 215V387M1080.5 195V368M1081.5 213V391M1082.5 198V382M1083.5 219V384M1084.5 210V375M1085.5 209V381M1086.5 196V392M1087.5 206V378M1088.5 205V382M1089.5 209V376M1090.5 210V380M1091.5 206V379M1092.5 216V374M1093.5 212V377M1094.5 196V387M1095.5 227V371M1096.5 199V382M1097.5 216V372M1098.5 206V382M1099.5 211V402M1100.5 207V384M1101.5 204V380M1102.5 238V380M1103.5 205V382M1104.5 198V365M1105.5 212V380M1106.5 247V373M1107.5 207V377M1108.5 196V350M1109.5 186V381M1110.5 211V381M1111.5 213V347M1112.5 205V352M1113.5 253V380M1114.5 200V385M1115.5 205V381M1116.5 216V394M1117.5 208V385M1118.5 199V370M1119.5 207V404M1120.5 244V372M1121.5 194V385M1122.5 215V376M1123.5 202V391M1124.5 205V369M1125.5 216V374M1126.5 193V389M1127.5 207V382M1128.5 201V353M1129.5 207V381M1130.5 201V374M1131.5 202V391M1132.5 196V376M1133.5 208V378M1134.5 200V383M1135.5 208V371M1136.5 200V388M1137.5 222V396M1138.5 198V374M1139.5 212V383M1140.5 201V373M1141.5 201V384M1142.5 207V370M1143.5 204V384M1144.5 202V378M1145.5 207V382M1146.5 204V383M1147.5 202V369M1148.5 212V376M1149.5 197V376M1150.5 203V372M1151.5 205V402M1152.5 213V377M1153.5 205V368M1154.5 209V381M1155.5 217V379M1156.5 205V371M1157.5 206V385M1158.5 220V371M1159.5 208V333M1160.5 207V377M1161.5 206V365M1162.5 207V387M1163.5 205V366M1164.5 203V373M1165.5 199V387M1166.5 200V379M1167.5 202V375M1168.5 196V378M1169.5 197V405M1170.5 225V371M1171.5 202V382M1172.5 192V366M1173.5 212V381M1174.5 226V373M1175.5 200V382M1176.5 190V403M1177.5 206V377M1178.5 200V371M1179.5 202V382M1180.5 207V381M1181.5 203V382M1182.5 212V378M1183.5 210V401M1184.5 210V375M1185.5 201V389M1186.5 214V375M1187.5 207V387M1188.5 211V403M1189.5 204V373M1190.5 211V378M1191.5 205V370M1192.5 208V384M1193.5 204V371M1194.5 207V379M1195.5 202V369M1196.5 213V376M1197.5 224V356M1198.5 246V351M1199.5 236V346M1200.5 243V350M1201.5 262V328M1202.5 231V333M1203.5 242V357M1204.5 233V333M1205.5 248V357M1206.5 232V348M1207.5 252V345M1208.5 240V347M1209.5 291V296M1210.5 246V355M1211.5 261V336M1212.5 240V347M1213.5 248V351M1214.5 241V338M1215.5 250V354M1216.5 244V335M1217.5 231V350M1218.5 249V335M1219.5 242V348M1220.5 254V350M1221.5 243V355M1222.5 271V321M1223.5 243V350M1224.5 249V325M1225.5 247V351M1226.5 265V350M1227.5 210V370M1228.5 232V357M1229.5 253V375M1230.5 188V369M1231.5 263V370M1232.5 210V352M1233.5 217V345M1234.5 228V378M1235.5 222V350M1236.5 237V330M1237.5 256V378M1238.5 212V368M1239.5 231V365M1240.5 219V372M1241.5 264V353M1242.5 218V389M1243.5 244V376M1244.5 209V362M1245.5 222V382M1246.5 251V377M1247.5 229V361M1248.5 217V368M1249.5 237V386M1250.5 207V326M1251.5 264V383M1252.5 208V355M1253.5 238V366M1254.5 215V364M1255.5 226V344M1256.5 211V366M1257.5 234V368M1258.5 205V355M1259.5 216V372M1260.5 220V332M1261.5 235V380M1262.5 213V356M1263.5 222V370M1264.5 204V368M1265.5 232V392M1266.5 262V377M1267.5 205V373M1268.5 243V359M1269.5 211V343M1270.5 222V368M1271.5 223V366M1272.5 223V378M1273.5 213V366M1274.5 233V377M1275.5 221V375M1276.5 249V357M1277.5 220V384M1278.5 200V348M1279.5 195V376M1280.5 241V363M1281.5 203V382M1282.5 233V377M1283.5 203V378M1284.5 242V377M1285.5 207V369M1286.5 217V372M1287.5 231V378M1288.5 211V337M1289.5 225V383M1290.5 220V369M1291.5 222V387M1292.5 245V367M1293.5 240V367M1294.5 194V380M1295.5 229V361M1296.5 213V372M1297.5 225V360M1298.5 221V368M1299.5 203V343M1300.5 230V382M1301.5 220V368M1302.5 221V381M1303.5 222V334M1304.5 210V388M1305.5 232V376M1306.5 221V397M1307.5 223V366M1308.5 201V388M1309.5 242V348M1310.5 218V381M1311.5 199V370M1312.5 215V375M1313.5 228V372M1314.5 217V387M1315.5 222V369M1316.5 204V374M1317.5 217V375M1318.5 231V365M1319.5 200V371M1320.5 219V385M1321.5 190V368M1322.5 228V374M1323.5 220V373M1324.5 200V369M1325.5 230V375M1326.5 221V367M1327.5 220V375M1328.5 212V387M1329.5 233V374M1330.5 220V371M1331.5 222V361M1332.5 207V381M1333.5 237V365M1334.5 209V391M1335.5 233V377M1336.5 201V369M1337.5 231V376M1338.5 240V369M1339.5 210V343M1340.5 238V383M1341.5 195V364M1342.5 222V355M1343.5 199V382M1344.5 227V393M1345.5 206V380M1346.5 229V387M1347.5 198V372M1348.5 212V397M1349.5 217V388M1350.5 178V380M1351.5 212V394M1352.5 200V373M1353.5 221V417M1354.5 215V364M1355.5 216V389M1356.5 203V380M1357.5 209V363M1358.5 241V383M1359.5 205V365M1360.5 211V375M1361.5 197V330M1362.5 214V360M1363.5 187V361M1364.5 226V381M1365.5 207V374M1366.5 180V389M1367.5 215V373M1368.5 197V375M1369.5 218V373M1370.5 208V380M1371.5 219V363M1372.5 214V378M1373.5 212V364M1374.5 219V373M1375.5 203V379M1376.5 215V417M1377.5 209V376M1378.5 209V378M1379.5 226V394M1380.5 206V368M1381.5 217V383M1382.5 178V373M1383.5 213V393M1384.5 205V373M1385.5 208V385M1386.5 191V385M1387.5 213V374M1388.5 205V388M1389.5 223V374M1390.5 207V379M1391.5 188V379M1392.5 208V381M1393.5 183V377M1394.5 210V405M1395.5 215V382M1396.5 181V378M1397.5 210V390M1398.5 196V382M1399.5 223V371M1400.5 194V389M1401.5 211V375M1402.5 197V376M1403.5 222V400M1404.5 205V365M1405.5 241V375M1406.5 208V377M1407.5 179V342M1408.5 205V394M1409.5 218V375M1410.5 197V385M1411.5 218V371M1412.5 195V391M1413.5 202V375M1414.5 216V383M1415.5 192V374M1416.5 253V385M1417.5 209V376M1418.5 216V389M1419.5 208V375M1420.5 228V380M1421.5 217V381M1422.5 203V367M1423.5 225V383M1424.5 213V404M1425.5 212V354M1426.5 212V339M1427.5 211V381M1428.5 248V378M1429.5 210V400M1430.5 222V370M1431.5 186V408M1432.5 224V375M1433.5 215V394M1434.5 258V381M1435.5 207V352M1436.5 216V356M1437.5 204V393M1438.5 214V370M1439.5 254V382M1440.5 200V383M1441.5 208V373M1442.5 242V353M1443.5 250V346M1444.5 202V378M1445.5 203V348M1446.5 214V379M1447.5 199V406M1448.5 224V382M1449.5 208V347M1450.5 216V391M1451.5 203V374M1452.5 225V407M1453.5 197V383M1454.5 220V367M1455.5 212V384M1456.5 252V383M1457.5 214V385M1458.5 194V378M1459.5 212V394M1460.5 192V369M1461.5 209V388M1462.5 204V373M1463.5 213V385M1464.5 208V381M1465.5 209V376M1466.5 209V354M1467.5 207V386M1468.5 252V371M1469.5 208V394M1470.5 207V383M1471.5 213V370M1472.5 211V382M1473.5 207V338M1474.5 184V390M1475.5 242V366M1476.5 206V380M1477.5 219V411M1478.5 194V379M1479.5 252V386M1480.5 196V373M1481.5 207V390M1482.5 215V371M1483.5 213V381M1484.5 206V381M1485.5 180V371M1486.5 204V388M1487.5 220V381M1488.5 214V369M1489.5 211V388M1490.5 210V384M1491.5 228V382M1492.5 256V333M1493.5 211V410M1494.5 195V369M1495.5 215V377M1496.5 207V365M1497.5 225V356M1498.5 199V387M1499.5 213V383M1500.5 172V386M1501.5 225V384M1502.5 214V372M1503.5 180V416M1504.5 207V378M1505.5 203V373M1506.5 223V360M1507.5 175V382M1508.5 186V375M1509.5 186V390M1510.5 239V363M1511.5 231V387M1512.5 231V366M1513.5 216V385M1514.5 212V371M1515.5 181V378M1516.5 219V415M1517.5 244V371M1518.5 199V389M1519.5 217V364M1520.5 199V373M1521.5 216V386M1522.5 201V367M1523.5 215V385M1524.5 205V368M1525.5 225V414M1526.5 209V366M1527.5 216V388M1528.5 215V364M1529.5 208V331M1530.5 189V384M1531.5 213V414M1532.5 193V372M1533.5 207V357M1534.5 219V386M1535.5 205V348M1536.5 207V393M1537.5 211V375M1538.5 201V350M1539.5 208V393M1540.5 212V401M1541.5 227V367M1542.5 201V382M1543.5 227V354M1544.5 199V393M1545.5 223V371M1546.5 198V380M1547.5 220V380M1548.5 178V381M1549.5 219V417M1550.5 197V379M1551.5 215V379M1552.5 198V376M1553.5 217V416M1554.5 213V365M1555.5 212V377M1556.5 203V339M1557.5 210V346M1558.5 207V384M1559.5 247V381M1560.5 198V392M1561.5 217V371M1562.5 196V381M1563.5 222V394M1564.5 207V382M1565.5 175V394M1566.5 225V380M1567.5 207V398M1568.5 219V382M1569.5 180V398M1570.5 190V384M1571.5 219V386M1572.5 204V383M1573.5 189V377M1574.5 203V375M1575.5 222V376M1576.5 196V358M1577.5 221V380M1578.5 201V370M1579.5 225V385M1580.5 178V416M1581.5 212V407M1582.5 258V375M1583.5 217V396M1584.5 210V381M1585.5 217V380M1586.5 253V379M1587.5 197V391M1588.5 217V372M1589.5 196V389M1590.5 252V377M1591.5 191V346M1592.5 209V393M1593.5 212V367M1594.5 200V386M1595.5 238V368M1596.5 195V348M1597.5 226V383M1598.5 206V373M1599.5 217V410M1600.5 205V338M1601.5 220V374M1602.5 206V371M1603.5 222V337M1604.5 195V386M1605.5 248V369M1606.5 209V390M1607.5 223V375M1608.5 209V388M1609.5 208V391M1610.5 216V380M1611.5 208V373M1612.5 213V337M1613.5 207V377M1614.5 240V390M1615.5 202V381M1616.5 221V375M1617.5 215V378M1618.5 254V379M1619.5 242V361M1620.5 207V383M1621.5 216V377M1622.5 222V357M1623.5 203V381M1624.5 228V373M1625.5 183V368M1626.5 214V376M1627.5 192V365M1628.5 230V331M1629.5 215V384M1630.5 218V378M1631.5 228V370M1632.5 215V376M1633.5 239V376M1634.5 206V385M1635.5 190V380M1636.5 222V376M1637.5 212V390M1638.5 230V374M1639.5 213V378M1640.5 212V379M1641.5 213V374M1642.5 212V378M1643.5 209V380M1644.5 220V371M1645.5 220V381M1646.5 240V378M1647.5 210V382M1648.5 220V369M1649.5 211V352M1650.5 229V376M1651.5 218V364M1652.5 220V377M1653.5 212V374M1654.5 223V383M1655.5 217V377M1656.5 213V376M1657.5 212V373M1658.5 242V346M1659.5 211V373M1660.5 211V365M1661.5 206V355M1662.5 208V378M1663.5 213V372M1664.5 205V387M1665.5 220V380M1666.5 217V374M1667.5 217V377M1668.5 210V378M1669.5 217V333M1670.5 226V377M1671.5 208V374M1672.5 227V370M1673.5 212V383M1674.5 221V374M1675.5 215V378M1676.5 187V377M1677.5 222V366M1678.5 200V383M1679.5 222V374M1680.5 232V384M1681.5 182V366M1682.5 214V346M1683.5 234V362M1684.5 206V383M1685.5 215V369M1686.5 206V389M1687.5 232V378M1688.5 202V388M1689.5 216V373M1690.5 198V382M1691.5 213V376M1692.5 209V383M1693.5 224V375M1694.5 202V380M1695.5 227V373M1696.5 208V378M1697.5 214V368M1698.5 223V346M1699.5 220V377M1700.5 205V356M1701.5 213V375M1702.5 217V370M1703.5 236V388M1704.5 201V371M1705.5 214V388M1706.5 206V381M1707.5 218V370M1708.5 199V373M1709.5 207V381M1710.5 219V364M1711.5 234V374M1712.5 206V375M1713.5 217V370M1714.5 210V373M1715.5 230V362M1716.5 218V384M1717.5 208V371M1718.5 226V374M1719.5 213V377M1720.5 202V364M1721.5 243V377M1722.5 204V368M1723.5 212V383M1724.5 242V373M1725.5 202V379M1726.5 215V365M1727.5 205V378M1728.5 228V367M1729.5 208V373M1730.5 230V364M1731.5 240V375M1732.5 218V339M1733.5 211V380M1734.5 227V376M1735.5 231V365M1736.5 194V378M1737.5 226V371M1738.5 203V373M1739.5 221V366M1740.5 204V372M1741.5 215V373M1742.5 224V366M1743.5 218V375M1744.5 213V362M1745.5 219V371M1746.5 210V365M1747.5 192V377M1748.5 220V367M1749.5 212V374M1750.5 217V373M1751.5 215V378M1752.5 209V378M1753.5 212V367M1754.5 210V382M1755.5 201V367M1756.5 211V381M1757.5 212V374M1758.5 210V374M1759.5 201V368M1760.5 221V373M1761.5 208V367M1762.5 218V378M1763.5 203V392M1764.5 224V364M1765.5 203V374M1766.5 223V370M1767.5 198V347M1768.5 222V383M1769.5 210V373M1770.5 228V374M1771.5 239V372M1772.5 204V376M1773.5 210V371M1774.5 220V353M1775.5 214V378M1776.5 228V370M1777.5 213V380M1778.5 252V376M1779.5 208V380M1780.5 221V376M1781.5 201V388M1782.5 188V388M1783.5 221V375M1784.5 200V379M1785.5 239V379M1786.5 203V381M1787.5 224V394M1788.5 211V363M1789.5 197V341M1790.5 241V373M1791.5 212V374M1792.5 225V381M1793.5 242V365M1794.5 200V383M1795.5 219V353M1796.5 202V383M1797.5 225V367M1798.5 239V376M1799.5 201V379M1800.5 217V378M1801.5 247V371M1802.5 185V383M1803.5 219V363M1804.5 209V389M1805.5 220V364M1806.5 216V375M1807.5 253V366M1808.5 217V385M1809.5 207V375M1810.5 212V384M1811.5 226V370M1812.5 208V388M1813.5 253V375M1814.5 206V380M1815.5 215V369M1816.5 186V390M1817.5 221V380M1818.5 202V379M1819.5 225V382M1820.5 214V377M1821.5 217V385M1822.5 213V369M1823.5 202V383M1824.5 207V366M1825.5 225V391M1826.5 198V371M1827.5 213V377M1828.5 204V366M1829.5 254V385M1830.5 205V376M1831.5 214V374M1832.5 207V374M1833.5 213V377M1834.5 215V363M1835.5 232V382M1836.5 208V364M1837.5 220V381M1838.5 210V380M1839.5 206V381M1840.5 208V365M1841.5 244V377M1842.5 200V386M1843.5 213V375M1844.5 211V378M1845.5 204V380M1846.5 223V368M1847.5 207V377M1848.5 212V378M1849.5 200V387M1850.5 218V340M1851.5 216V392M1852.5 249V373M1853.5 213V336M1854.5 213V388M1855.5 224V366M1856.5 212V372M1857.5 220V384M1858.5 198V371M1859.5 224V372M1860.5 250V334M1861.5 267V320M1862.5 279V309M1863.5 288V304M1864.5 288V299M1865.5 290V297M1866.5 292V296M363.5 609V692M364.5 591V672M365.5 616V687M366.5 610V687M367.5 594V686M368.5 613V689M369.5 621V667M370.5 607V686M371.5 615V690M372.5 607V685M373.5 593V688M374.5 613V693M375.5 609V689M376.5 615V690M377.5 610V685M378.5 608V686M379.5 612V688M380.5 604V685M381.5 609V685M382.5 609V679M383.5 610V675M384.5 610V691M385.5 612V685M386.5 611V687M387.5 626V672M388.5 604V690M389.5 614V687M390.5 607V687M391.5 608V691M392.5 607V686M393.5 608V689M394.5 617V686M395.5 617V684M396.5 626V691M397.5 608V686M398.5 608V689M399.5 610V684M400.5 605V685M401.5 613V688M402.5 609V683M403.5 611V686M404.5 605V690M405.5 611V667M406.5 606V692M407.5 613V677M408.5 612V692M409.5 612V688M410.5 612V693M411.5 611V677M412.5 619V689M413.5 612V685M414.5 612V687M415.5 608V684M416.5 615V688M417.5 609V683M418.5 611V687M419.5 611V687M420.5 611V691M421.5 610V687M422.5 611V690M423.5 589V685M424.5 578V711M425.5 607V707M426.5 583V713M427.5 590V706M428.5 588V706M429.5 588V699M430.5 589V702M431.5 586V706M432.5 588V703M433.5 579V706M434.5 591V702M435.5 591V708M436.5 590V707M437.5 590V705M438.5 603V708M439.5 581V704M440.5 591V710M441.5 590V708M442.5 587V705M443.5 590V707M444.5 591V700M445.5 590V703M446.5 591V709M447.5 584V700M448.5 590V705M449.5 581V701M450.5 589V705M451.5 585V710M452.5 588V712M453.5 589V703M454.5 568V725M455.5 561V724M456.5 572V716M457.5 582V724M458.5 561V710M459.5 577V720M460.5 568V722M461.5 569V688M462.5 569V726M463.5 562V726M464.5 570V703M465.5 551V729M466.5 571V741M467.5 552V720M468.5 568V717M469.5 558V720M470.5 564V715M471.5 571V718M472.5 553V711M473.5 560V722M474.5 565V710M475.5 563V722M476.5 561V718M477.5 601V718M478.5 558V715M479.5 574V720M480.5 571V717M481.5 563V714M482.5 567V723M483.5 557V716M484.5 565V720M485.5 559V722M486.5 551V717M487.5 559V705M488.5 558V722M489.5 567V698M490.5 557V721M491.5 595V716M492.5 566V721M493.5 565V719M494.5 568V721M495.5 568V709M496.5 558V723M497.5 564V708M498.5 566V730M499.5 558V716M500.5 564V724M501.5 560V725M502.5 561V717M503.5 567V720M504.5 564V726M505.5 557V715M506.5 572V719M507.5 568V720M508.5 562V726M509.5 571V717M510.5 571V728M511.5 567V719M512.5 568V720M513.5 561V722M514.5 569V721M515.5 562V713M516.5 568V698M517.5 565V730M518.5 629V684M519.5 619V683M520.5 613V686M521.5 618V681M522.5 616V669M523.5 642V650M524.5 616V685M525.5 619V683M526.5 616V677M527.5 619V683M528.5 630V690M529.5 615V680M530.5 642V648M531.5 618V683M532.5 618V683M533.5 619V684M534.5 618V682M535.5 620V683M536.5 618V674M537.5 618V685M538.5 618V683M539.5 620V684M540.5 629V683M541.5 618V688M542.5 621V672M543.5 616V684M544.5 618V678M545.5 641V650M546.5 621V680M547.5 610V717M548.5 534V708M549.5 587V713M550.5 571V727M551.5 572V714M552.5 580V728M553.5 558V704M554.5 581V719M555.5 561V716M556.5 585V709M557.5 572V715M558.5 595V678M559.5 558V727M560.5 566V741M561.5 565V678M562.5 571V715M563.5 557V726M564.5 568V739M565.5 576V715M566.5 558V724M567.5 578V707M568.5 572V731M569.5 575V688M570.5 563V718M571.5 575V734M572.5 573V707M573.5 567V721M574.5 595V707M575.5 547V727M576.5 572V711M577.5 574V697M578.5 591V723M579.5 537V704M580.5 609V730M581.5 565V716M582.5 607V723M583.5 563V704M584.5 586V733M585.5 571V707M586.5 569V733M587.5 583V706M588.5 544V730M589.5 573V701M590.5 577V714M591.5 559V730M592.5 571V718M593.5 587V712M594.5 566V715M595.5 585V719M596.5 562V713M597.5 576V714M598.5 574V747M599.5 569V711M600.5 534V730M601.5 579V715M602.5 568V713M603.5 568V724M604.5 577V707M605.5 574V719M606.5 567V710M607.5 578V729M608.5 568V716M609.5 586V715M610.5 557V747M611.5 582V682M612.5 574V726M613.5 563V704M614.5 583V718M615.5 562V722M616.5 586V715M617.5 596V748M618.5 604V683M619.5 573V714M620.5 574V715M621.5 576V714M622.5 569V717M623.5 607V722M624.5 558V720M625.5 566V716M626.5 580V734M627.5 559V712M628.5 572V717M629.5 568V702M630.5 566V744M631.5 569V707M632.5 573V676M633.5 593V685M634.5 556V730M635.5 576V719M636.5 561V719M637.5 614V710M638.5 608V724M639.5 540V706M640.5 603V712M641.5 534V688M642.5 544V726M643.5 580V747M644.5 560V714M645.5 567V720M646.5 592V731M647.5 563V702M648.5 569V695M649.5 569V729M650.5 552V714M651.5 566V717M652.5 598V722M653.5 573V741M654.5 564V742M655.5 583V707M656.5 607V721M657.5 597V708M658.5 572V718M659.5 584V704M660.5 560V728M661.5 590V720M662.5 576V712M663.5 612V715M664.5 532V719M665.5 593V691M666.5 575V728M667.5 584V712M668.5 565V726M669.5 575V683M670.5 562V687M671.5 586V743M672.5 557V704M673.5 586V726M674.5 574V708M675.5 576V682M676.5 573V712M677.5 569V715M678.5 573V711M679.5 575V725M680.5 574V744M681.5 567V697M682.5 578V722M683.5 565V714M684.5 601V716M685.5 607V709M686.5 568V713M687.5 571V726M688.5 557V703M689.5 566V714M690.5 535V682M691.5 580V679M692.5 573V682M693.5 565V684M694.5 591V730M695.5 617V746M696.5 561V708M697.5 570V694M698.5 582V717M699.5 555V726M700.5 574V711M701.5 573V726M702.5 573V711M703.5 560V711M704.5 536V740M705.5 583V702M706.5 574V712M707.5 566V689M708.5 578V715M709.5 573V697M710.5 570V722M711.5 567V719M712.5 567V722M713.5 574V708M714.5 567V716M715.5 583V704M716.5 538V744M717.5 568V684M718.5 580V678M719.5 558V718M720.5 576V705M721.5 574V724M722.5 554V707M723.5 583V729M724.5 560V720M725.5 579V707M726.5 571V720M727.5 584V677M728.5 557V740M729.5 580V736M730.5 557V715M731.5 577V707M732.5 559V718M733.5 586V701M734.5 610V711M735.5 556V717M736.5 570V704M737.5 568V710M738.5 573V725M739.5 567V706M740.5 572V716M741.5 570V716M742.5 561V710M743.5 597V693M744.5 595V721M745.5 560V716M746.5 606V720M747.5 570V707M748.5 569V731M749.5 590V710M750.5 570V729M751.5 579V713M752.5 534V730M753.5 576V715M754.5 538V724M755.5 617V734M756.5 558V710M757.5 586V715M758.5 564V729M759.5 573V720M760.5 560V709M761.5 544V716M762.5 569V684M763.5 570V717M764.5 562V676M765.5 611V745M766.5 556V708M767.5 569V723M768.5 606V703M769.5 570V711M770.5 558V722M771.5 582V686M772.5 569V693M773.5 578V681M774.5 567V718M775.5 585V706M776.5 559V715M777.5 585V714M778.5 577V714M779.5 578V714M780.5 579V721M781.5 568V712M782.5 582V691M783.5 580V726M784.5 576V706M785.5 573V696M786.5 570V724M787.5 586V711M788.5 561V681M789.5 570V727M790.5 553V702M791.5 574V722M792.5 574V720M793.5 556V718M794.5 588V745M795.5 575V740M796.5 573V683M797.5 556V727M798.5 589V716M799.5 558V709M800.5 587V716M801.5 560V711M802.5 616V679M803.5 618V681M804.5 619V683M805.5 619V681M806.5 619V672M807.5 618V684M808.5 614V679M809.5 619V664M810.5 617V681M811.5 618V680M812.5 617V680M813.5 618V681M814.5 641V649M815.5 568V725M816.5 580V721M817.5 574V730M818.5 585V724M819.5 560V712M820.5 556V720M821.5 571V727M822.5 588V690M823.5 574V704M824.5 576V725M825.5 546V713M826.5 587V720M827.5 577V727M828.5 566V712M829.5 582V724M830.5 565V715M831.5 581V720M832.5 566V712M833.5 543V718M834.5 573V731M835.5 576V712M836.5 573V729M837.5 584V720M838.5 570V740M839.5 569V719M840.5 584V718M841.5 559V714M842.5 579V732M843.5 539V695M844.5 607V734M845.5 564V720M846.5 577V723M847.5 564V725M848.5 584V712M849.5 563V725M850.5 588V717M851.5 592V732M852.5 563V722M853.5 586V726M854.5 568V710M855.5 585V717M856.5 560V729M857.5 587V706M858.5 572V729M859.5 538V711M860.5 584V726M861.5 548V678M862.5 573V694M863.5 565V726M864.5 567V746M865.5 581V713M866.5 572V723M867.5 573V715M868.5 535V699M869.5 587V727M870.5 565V707M871.5 572V728M872.5 582V720M873.5 566V718M874.5 573V734M875.5 572V720M876.5 585V724M877.5 562V720M878.5 577V739M879.5 567V723M880.5 579V718M881.5 545V721M882.5 606V729M883.5 559V707M884.5 578V717M885.5 564V690M886.5 583V743M887.5 570V738M888.5 577V711M889.5 562V726M890.5 564V722M891.5 600V734M892.5 555V719M893.5 572V729M894.5 565V710M895.5 574V732M896.5 574V710M897.5 575V744M898.5 564V720M899.5 587V713M900.5 576V727M901.5 540V714M902.5 572V716M903.5 572V727M904.5 568V723M905.5 568V710M906.5 572V724M907.5 567V724M908.5 537V723M909.5 573V739M910.5 575V711M911.5 559V725M912.5 590V717M913.5 563V727M914.5 566V706M915.5 571V725M916.5 559V749M917.5 584V712M918.5 569V724M919.5 566V703M920.5 574V734M921.5 568V723M922.5 565V729M923.5 582V711M924.5 554V726M925.5 566V713M926.5 571V722M927.5 566V695M928.5 578V736M929.5 566V725M930.5 568V722M931.5 591V683M932.5 562V724M933.5 575V714M934.5 568V718M935.5 571V716M936.5 565V749M937.5 582V711M938.5 574V731M939.5 611V717M940.5 571V724M941.5 572V713M942.5 567V724M943.5 576V710M944.5 576V725M945.5 578V717M946.5 570V710M947.5 570V721M948.5 581V715M949.5 558V715M950.5 581V727M951.5 600V712M952.5 570V733M953.5 575V714M954.5 567V723M955.5 537V721M956.5 574V736M957.5 575V720M958.5 566V727M959.5 579V714M960.5 568V730M961.5 574V749M962.5 569V716M963.5 579V731M964.5 556V711M965.5 577V726M966.5 557V720M967.5 544V740M968.5 585V709M969.5 605V719M970.5 573V713M971.5 594V726M972.5 571V713M973.5 570V741M974.5 578V698M975.5 577V723M976.5 606V710M977.5 545V723M978.5 580V722M979.5 558V716M980.5 568V722M981.5 584V724M982.5 570V714M983.5 579V720M984.5 576V724M985.5 570V716M986.5 537V726M987.5 570V742M988.5 543V715M989.5 539V724M990.5 600V749M991.5 608V721M992.5 569V715M993.5 575V731M994.5 563V720M995.5 574V736M996.5 562V713M997.5 581V719M998.5 572V729M999.5 563V706M1000.5 545V722M1001.5 567V714M1002.5 581V721M1003.5 572V696M1004.5 575V729M1005.5 568V715M1006.5 581V700M1007.5 558V728M1008.5 536V715M1009.5 610V719M1010.5 608V718M1011.5 576V725M1012.5 569V738M1013.5 576V719M1014.5 562V720M1015.5 576V721M1016.5 599V720M1017.5 559V732M1018.5 571V711M1019.5 574V726M1020.5 565V708M1021.5 573V747M1022.5 559V724M1023.5 575V714M1024.5 564V696M1025.5 612V736M1026.5 575V718M1027.5 559V721M1028.5 578V728M1029.5 568V720M1030.5 580V719M1031.5 568V713M1032.5 585V722M1033.5 562V717M1034.5 585V706M1035.5 534V718M1036.5 573V712M1037.5 576V689M1038.5 562V718M1039.5 584V727M1040.5 602V720M1041.5 554V734M1042.5 569V722M1043.5 611V709M1044.5 573V715M1045.5 562V727M1046.5 583V722M1047.5 571V687M1048.5 572V725M1049.5 581V745M1050.5 574V702M1051.5 577V720M1052.5 560V697M1053.5 577V726M1054.5 569V722M1055.5 572V720M1056.5 563V684M1057.5 570V729M1058.5 564V710M1059.5 565V721M1060.5 581V723M1061.5 572V701M1062.5 569V701M1063.5 558V720M1064.5 576V725M1065.5 570V741M1066.5 557V720M1067.5 581V689M1068.5 573V728M1069.5 572V712M1070.5 581V717M1071.5 556V724M1072.5 571V716M1073.5 563V688M1074.5 560V722M1075.5 559V730M1076.5 566V727M1077.5 561V718M1078.5 543V734M1079.5 562V719M1080.5 560V734M1081.5 572V713M1082.5 559V734M1083.5 557V711M1084.5 568V730M1085.5 561V723M1086.5 549V721M1087.5 566V705M1088.5 556V730M1089.5 563V733M1090.5 554V735M1091.5 543V732M1092.5 573V719M1093.5 548V735M1094.5 566V712M1095.5 564V729M1096.5 552V718M1097.5 602V734M1098.5 545V712M1099.5 564V735M1100.5 577V742M1101.5 568V722M1102.5 553V733M1103.5 573V718M1104.5 551V735M1105.5 564V712M1106.5 548V735M1107.5 561V725M1108.5 554V730M1109.5 564V732M1110.5 551V734M1111.5 562V720M1112.5 592V727M1113.5 552V736M1114.5 560V728M1115.5 567V720M1116.5 562V733M1117.5 556V718M1118.5 572V724M1119.5 567V726M1120.5 563V730M1121.5 567V729M1122.5 562V726M1123.5 562V734M1124.5 558V731M1125.5 558V711M1126.5 569V727M1127.5 561V695M1128.5 551V724M1129.5 566V736M1130.5 555V718M1131.5 559V735M1132.5 555V718M1133.5 557V721M1134.5 564V730M1135.5 546V683M1136.5 565V735M1137.5 558V715M1138.5 561V726M1139.5 551V719M1140.5 590V737M1141.5 571V721M1142.5 549V706M1143.5 565V726M1144.5 566V731M1145.5 563V716M1146.5 573V733M1147.5 563V724M1148.5 554V733M1149.5 558V728M1150.5 552V720M1151.5 568V737M1152.5 561V730M1153.5 554V718M1154.5 570V727M1155.5 593V729M1156.5 557V739M1157.5 567V732M1158.5 555V726M1159.5 573V734M1160.5 553V743M1161.5 586V715M1162.5 552V724M1163.5 575V736M1164.5 567V712M1165.5 605V727M1166.5 567V721M1167.5 560V733M1168.5 573V720M1169.5 558V693M1170.5 556V728M1171.5 555V688M1172.5 568V735M1173.5 584V735M1174.5 566V705M1175.5 564V733M1176.5 580V731M1177.5 567V731M1178.5 567V737M1179.5 546V723M1180.5 567V736M1181.5 558V730M1182.5 578V729M1183.5 558V713M1184.5 571V720M1185.5 588V685M1186.5 555V687M1187.5 563V732M1188.5 549V724M1189.5 554V712M1190.5 561V729M1191.5 558V714M1192.5 563V727M1193.5 553V716M1194.5 563V688M1195.5 562V730M1196.5 562V724M1197.5 611V690M1198.5 595V704M1199.5 622V676M1200.5 578V700M1201.5 601V709M1202.5 620V697M1203.5 591V702M1204.5 607V696M1205.5 584V698M1206.5 597V703M1207.5 598V700M1208.5 615V689M1209.5 642V650M1210.5 581V715M1211.5 606V693M1212.5 579V701M1213.5 624V698M1214.5 593V692M1215.5 596V699M1216.5 605V684M1217.5 589V703M1218.5 585V696M1219.5 604V712M1220.5 593V701M1221.5 607V684M1222.5 587V708M1223.5 609V708M1224.5 593V687M1225.5 601V702M1226.5 582V697M1227.5 587V731M1228.5 542V705M1229.5 593V728M1230.5 562V713M1231.5 587V699M1232.5 571V685M1233.5 582V717M1234.5 569V694M1235.5 579V720M1236.5 567V699M1237.5 573V721M1238.5 571V700M1239.5 580V723M1240.5 580V702M1241.5 570V727M1242.5 597V707M1243.5 567V721M1244.5 598V719M1245.5 562V714M1246.5 547V726M1247.5 579V723M1248.5 566V705M1249.5 576V728M1250.5 573V689M1251.5 575V742M1252.5 583V715M1253.5 578V736M1254.5 559V710M1255.5 590V728M1256.5 571V711M1257.5 548V717M1258.5 576V733M1259.5 578V720M1260.5 582V699M1261.5 617V718M1262.5 568V694M1263.5 615V733M1264.5 569V708M1265.5 582V735M1266.5 561V702M1267.5 574V686M1268.5 590V713M1269.5 565V712M1270.5 603V726M1271.5 563V713M1272.5 607V718M1273.5 562V718M1274.5 585V707M1275.5 561V728M1276.5 579V719M1277.5 578V715M1278.5 567V726M1279.5 617V708M1280.5 582V730M1281.5 570V717M1282.5 595V729M1283.5 583V723M1284.5 574V709M1285.5 608V733M1286.5 561V723M1287.5 556V725M1288.5 580V684M1289.5 566V731M1290.5 569V716M1291.5 581V689M1292.5 576V704M1293.5 568V730M1294.5 578V728M1295.5 568V711M1296.5 549V687M1297.5 574V725M1298.5 556V715M1299.5 571V730M1300.5 583V716M1301.5 562V728M1302.5 583V710M1303.5 577V742M1304.5 578V720M1305.5 559V706M1306.5 588V726M1307.5 572V721M1308.5 584V729M1309.5 544V727M1310.5 580V727M1311.5 574V708M1312.5 570V736M1313.5 545V721M1314.5 578V726M1315.5 571V715M1316.5 582V724M1317.5 569V713M1318.5 591V728M1319.5 576V716M1320.5 599V738M1321.5 564V720M1322.5 579V730M1323.5 558V722M1324.5 579V718M1325.5 567V725M1326.5 574V698M1327.5 576V737M1328.5 575V723M1329.5 543V719M1330.5 576V723M1331.5 558V715M1332.5 547V728M1333.5 584V719M1334.5 563V736M1335.5 577V724M1336.5 553V737M1337.5 571V716M1338.5 558V691M1339.5 550V723M1340.5 562V727M1341.5 606V718M1342.5 568V703M1343.5 556V735M1344.5 531V733M1345.5 575V728M1346.5 553V726M1347.5 535V742M1348.5 566V732M1349.5 564V729M1350.5 576V743M1351.5 552V753M1352.5 572V734M1353.5 554V724M1354.5 568V739M1355.5 557V724M1356.5 560V738M1357.5 536V730M1358.5 563V736M1359.5 581V731M1360.5 559V717M1361.5 562V750M1362.5 561V718M1363.5 566V693M1364.5 555V751M1365.5 575V731M1366.5 542V718M1367.5 578V736M1368.5 603V716M1369.5 539V756M1370.5 565V724M1371.5 569V735M1372.5 549V724M1373.5 578V737M1374.5 553V718M1375.5 543V734M1376.5 606V712M1377.5 554V738M1378.5 564V714M1379.5 567V739M1380.5 569V726M1381.5 561V738M1382.5 575V729M1383.5 555V726M1384.5 568V716M1385.5 564V734M1386.5 583V699M1387.5 608V756M1388.5 571V716M1389.5 560V735M1390.5 597V724M1391.5 603V723M1392.5 568V726M1393.5 570V741M1394.5 536V726M1395.5 565V733M1396.5 575V720M1397.5 535V736M1398.5 558V729M1399.5 565V739M1400.5 593V716M1401.5 591V728M1402.5 552V742M1403.5 559V726M1404.5 559V725M1405.5 586V733M1406.5 558V730M1407.5 566V718M1408.5 551V725M1409.5 583V724M1410.5 596V735M1411.5 544V727M1412.5 602V729M1413.5 567V718M1414.5 571V732M1415.5 569V695M1416.5 569V728M1417.5 568V713M1418.5 559V731M1419.5 563V720M1420.5 569V734M1421.5 559V714M1422.5 605V754M1423.5 566V716M1424.5 600V692M1425.5 560V729M1426.5 562V694M1427.5 593V731M1428.5 547V736M1429.5 573V736M1430.5 557V738M1431.5 563V712M1432.5 574V700M1433.5 585V734M1434.5 553V727M1435.5 577V731M1436.5 563V731M1437.5 564V740M1438.5 562V735M1439.5 571V724M1440.5 545V746M1441.5 565V721M1442.5 550V737M1443.5 559V689M1444.5 571V732M1445.5 563V703M1446.5 552V739M1447.5 560V732M1448.5 560V719M1449.5 571V733M1450.5 561V725M1451.5 563V739M1452.5 574V722M1453.5 549V741M1454.5 577V728M1455.5 563V732M1456.5 561V733M1457.5 576V722M1458.5 559V698M1459.5 575V741M1460.5 554V722M1461.5 576V731M1462.5 555V744M1463.5 558V720M1464.5 561V730M1465.5 562V702M1466.5 545V737M1467.5 565V747M1468.5 563V714M1469.5 568V728M1470.5 565V717M1471.5 561V761M1472.5 581V717M1473.5 557V728M1474.5 576V718M1475.5 559V730M1476.5 575V725M1477.5 555V728M1478.5 579V712M1479.5 551V694M1480.5 579V745M1481.5 559V714M1482.5 562V731M1483.5 561V727M1484.5 567V692M1485.5 561V741M1486.5 558V730M1487.5 573V727M1488.5 552V725M1489.5 590V729M1490.5 564V722M1491.5 574V738M1492.5 568V701M1493.5 559V727M1494.5 579V716M1495.5 566V729M1496.5 589V725M1497.5 559V728M1498.5 566V718M1499.5 567V720M1500.5 591V727M1501.5 557V719M1502.5 561V734M1503.5 559V718M1504.5 564V743M1505.5 563V730M1506.5 587V739M1507.5 567V697M1508.5 537V733M1509.5 576V731M1510.5 565V736M1511.5 573V736M1512.5 557V734M1513.5 585V720M1514.5 565V728M1515.5 563V728M1516.5 530V733M1517.5 563V701M1518.5 574V729M1519.5 571V717M1520.5 570V729M1521.5 562V723M1522.5 591V763M1523.5 552V712M1524.5 583V729M1525.5 564V712M1526.5 556V727M1527.5 576V719M1528.5 553V731M1529.5 575V729M1530.5 551V741M1531.5 565V725M1532.5 602V737M1533.5 543V716M1534.5 574V730M1535.5 549V728M1536.5 568V731M1537.5 549V720M1538.5 566V736M1539.5 585V720M1540.5 551V732M1541.5 567V736M1542.5 543V726M1543.5 583V744M1544.5 548V729M1545.5 575V741M1546.5 549V755M1547.5 568V737M1548.5 553V730M1549.5 559V742M1550.5 565V725M1551.5 566V730M1552.5 557V750M1553.5 593V690M1554.5 567V756M1555.5 555V742M1556.5 574V728M1557.5 547V732M1558.5 575V721M1559.5 563V723M1560.5 561V728M1561.5 590V721M1562.5 536V723M1563.5 596V727M1564.5 557V731M1565.5 575V698M1566.5 555V731M1567.5 579V720M1568.5 609V722M1569.5 568V732M1570.5 551V714M1571.5 563V701M1572.5 575V733M1573.5 573V719M1574.5 553V737M1575.5 573V724M1576.5 568V732M1577.5 586V731M1578.5 562V723M1579.5 566V731M1580.5 582V714M1581.5 569V734M1582.5 563V718M1583.5 577V731M1584.5 560V717M1585.5 529V721M1586.5 563V721M1587.5 576V722M1588.5 546V737M1589.5 575V712M1590.5 547V723M1591.5 592V706M1592.5 566V736M1593.5 557V721M1594.5 574V738M1595.5 558V713M1596.5 543V729M1597.5 563V716M1598.5 602V714M1599.5 560V735M1600.5 581V730M1601.5 598V724M1602.5 574V714M1603.5 572V698M1604.5 592V727M1605.5 576V729M1606.5 563V718M1607.5 569V727M1608.5 595V735M1609.5 560V729M1610.5 572V727M1611.5 559V736M1612.5 571V724M1613.5 555V724M1614.5 543V725M1615.5 564V732M1616.5 576V713M1617.5 561V722M1618.5 571V716M1619.5 566V721M1620.5 571V728M1621.5 560V725M1622.5 580V742M1623.5 540V723M1624.5 546V735M1625.5 568V729M1626.5 565V725M1627.5 568V733M1628.5 559V724M1629.5 578V738M1630.5 561V726M1631.5 562V728M1632.5 568V731M1633.5 556V727M1634.5 583V722M1635.5 565V723M1636.5 574V726M1637.5 558V730M1638.5 577V727M1639.5 560V721M1640.5 577V730M1641.5 561V718M1642.5 582V742M1643.5 570V694M1644.5 603V723M1645.5 563V712M1646.5 575V727M1647.5 570V715M1648.5 587V727M1649.5 564V714M1650.5 568V695M1651.5 592V692M1652.5 560V729M1653.5 574V710M1654.5 571V725M1655.5 585V719M1656.5 567V720M1657.5 581V715M1658.5 596V731M1659.5 561V718M1660.5 573V728M1661.5 562V729M1662.5 580V715M1663.5 605V725M1664.5 560V723M1665.5 571V722M1666.5 600V723M1667.5 561V740M1668.5 578V722M1669.5 564V713M1670.5 569V723M1671.5 569V729M1672.5 593V723M1673.5 558V687M1674.5 567V735M1675.5 556V724M1676.5 564V730M1677.5 567V721M1678.5 550V733M1679.5 584V725M1680.5 560V683M1681.5 571V727M1682.5 579V730M1683.5 557V710M1684.5 576V728M1685.5 542V722M1686.5 570V732M1687.5 565V690M1688.5 580V722M1689.5 564V730M1690.5 586V739M1691.5 556V717M1692.5 572V729M1693.5 563V722M1694.5 570V712M1695.5 557V683M1696.5 601V722M1697.5 595V713M1698.5 600V722M1699.5 559V725M1700.5 584V736M1701.5 575V727M1702.5 573V717M1703.5 556V733M1704.5 566V718M1705.5 551V729M1706.5 569V716M1707.5 554V729M1708.5 581V723M1709.5 570V719M1710.5 568V704M1711.5 556V735M1712.5 576V688M1713.5 553V718M1714.5 578V729M1715.5 565V710M1716.5 563V722M1717.5 565V717M1718.5 569V717M1719.5 573V727M1720.5 588V688M1721.5 558V729M1722.5 581V720M1723.5 558V731M1724.5 546V718M1725.5 567V733M1726.5 568V729M1727.5 568V737M1728.5 595V705M1729.5 580V729M1730.5 557V722M1731.5 576V734M1732.5 569V724M1733.5 562V729M1734.5 571V715M1735.5 555V727M1736.5 570V706M1737.5 584V728M1738.5 570V725M1739.5 562V712M1740.5 578V728M1741.5 572V736M1742.5 570V721M1743.5 580V713M1744.5 558V727M1745.5 572V720M1746.5 563V719M1747.5 576V728M1748.5 571V742M1749.5 559V710M1750.5 575V691M1751.5 570V730M1752.5 544V715M1753.5 572V718M1754.5 559V731M1755.5 586V702M1756.5 558V719M1757.5 572V727M1758.5 571V717M1759.5 571V735M1760.5 549V729M1761.5 573V722M1762.5 564V732M1763.5 578V721M1764.5 559V699M1765.5 583V719M1766.5 542V723M1767.5 611V721M1768.5 571V726M1769.5 557V724M1770.5 575V731M1771.5 570V712M1772.5 567V733M1773.5 579V720M1774.5 587V735M1775.5 557V736M1776.5 577V725M1777.5 606V723M1778.5 558V731M1779.5 574V717M1780.5 565V733M1781.5 599V721M1782.5 553V729M1783.5 580V720M1784.5 556V733M1785.5 593V732M1786.5 568V720M1787.5 567V725M1788.5 554V726M1789.5 579V734M1790.5 566V726M1791.5 566V714M1792.5 592V734M1793.5 594V726M1794.5 560V718M1795.5 566V686M1796.5 571V733M1797.5 571V718M1798.5 545V721M1799.5 571V711M1800.5 562V729M1801.5 575V717M1802.5 566V697M1803.5 568V736M1804.5 563V723M1805.5 551V730M1806.5 567V718M1807.5 559V726M1808.5 586V719M1809.5 563V728M1810.5 565V720M1811.5 594V720M1812.5 561V725M1813.5 577V703M1814.5 563V720M1815.5 576V729M1816.5 575V736M1817.5 561V718M1818.5 602V735M1819.5 564V721M1820.5 574V727M1821.5 565V726M1822.5 574V726M1823.5 575V732M1824.5 562V726M1825.5 573V716M1826.5 549V726M1827.5 607V722M1828.5 572V724M1829.5 569V714M1830.5 566V721M1831.5 576V719M1832.5 570V726M1833.5 565V714M1834.5 580V741M1835.5 568V722M1836.5 583V730M1837.5 561V715M1838.5 544V738M1839.5 577V716M1840.5 558V719M1841.5 582V725M1842.5 557V716M1843.5 566V734M1844.5 566V719M1845.5 552V738M1846.5 565V730M1847.5 554V726M1848.5 562V716M1849.5 586V727M1850.5 582V720M1851.5 566V686M1852.5 556V727M1853.5 567V720M1854.5 612V728M1855.5 597V720M1856.5 574V730M1857.5 567V717M1858.5 581V726M1859.5 574V715M1860.5 608V682M1861.5 620V670M1862.5 631V660M1863.5 637V654M1864.5 640V651M1865.5 642V649M1866.5 644V647" stroke="#6ef24e" stroke-width="1" fill="none"/><path d="M363 293.5H1869M363 645.5H1869" stroke="#7ccb48" stroke-width="1"/><path d="M358 137.5H1871M358 449.5H1871M358 489.5H1871M358 801.5H1871" stroke="#e8e8e8" stroke-width="1.2" shape-rendering="auto"/><path d="M358.5 121V468M358.5 473V820" stroke="#ffff00" stroke-width="1" stroke-dasharray="1 3"/><path d="M358.5 119V468M358.5 475V820" stroke="#004000" stroke-width="1" stroke-dasharray="1 3"/><path d="M1871.5 118V468M1871.5 472V820M358 820.5H1872" stroke="#c8c8c8" stroke-width="1"/><path d="M1871 169.5H1876M1871 206.5H1876M1871 231.5H1876M1871 249.5H1876M1871 262.5H1876M1871 277.5H1876M1871 293.5H1876M1871 309.5H1876M1871 324.5H1876M1871 337.5H1876M1871 355.5H1876M1871 380.5H1876M1871 417.5H1876M1871 449.5H1876M1871 122.5H1874M1871 131.5H1874M1871 140.5H1874M1871 149.5H1874M1871 158.5H1874M1871 167.5H1874M1871 176.5H1874M1871 185.5H1874M1871 194.5H1874M1871 203.5H1874M1871 212.5H1874M1871 221.5H1874M1871 230.5H1874M1871 239.5H1874M1871 248.5H1874M1871 257.5H1874M1871 266.5H1874M1871 275.5H1874M1871 284.5H1874M1871 293.5H1874M1871 302.5H1874M1871 311.5H1874M1871 320.5H1874M1871 329.5H1874M1871 338.5H1874M1871 347.5H1874M1871 356.5H1874M1871 365.5H1874M1871 374.5H1874M1871 383.5H1874M1871 392.5H1874M1871 401.5H1874M1871 410.5H1874M1871 419.5H1874M1871 428.5H1874M1871 437.5H1874M1871 446.5H1874M1871 455.5H1874M1871 464.5H1874M1871 521.5H1876M1871 558.5H1876M1871 583.5H1876M1871 601.5H1876M1871 614.5H1876M1871 629.5H1876M1871 645.5H1876M1871 661.5H1876M1871 676.5H1876M1871 689.5H1876M1871 707.5H1876M1871 732.5H1876M1871 769.5H1876M1871 801.5H1876M1871 474.5H1874M1871 483.5H1874M1871 492.5H1874M1871 501.5H1874M1871 510.5H1874M1871 519.5H1874M1871 528.5H1874M1871 537.5H1874M1871 546.5H1874M1871 555.5H1874M1871 564.5H1874M1871 573.5H1874M1871 582.5H1874M1871 591.5H1874M1871 600.5H1874M1871 609.5H1874M1871 618.5H1874M1871 627.5H1874M1871 636.5H1874M1871 645.5H1874M1871 654.5H1874M1871 663.5H1874M1871 672.5H1874M1871 681.5H1874M1871 690.5H1874M1871 699.5H1874M1871 708.5H1874M1871 717.5H1874M1871 726.5H1874M1871 735.5H1874M1871 744.5H1874M1871 753.5H1874M1871 762.5H1874M1871 771.5H1874M1871 780.5H1874M1871 789.5H1874M1871 798.5H1874M1871 807.5H1874M1871 816.5H1874" stroke="#c8c8c8" stroke-width="1"/><path d="M358.5 820V826M389.5 820V824M421.5 820V826M453.5 820V824M484.5 820V826M516.5 820V824M548.5 820V826M579.5 820V824M611.5 820V826M643.5 820V824M674.5 820V826M706.5 820V824M738.5 820V826M769.5 820V824M801.5 820V826M833.5 820V824M864.5 820V826M896.5 820V824M928.5 820V826M959.5 820V824M991.5 820V826M1023.5 820V824M1054.5 820V826M1086.5 820V824M1118.5 820V826M1149.5 820V824M1181.5 820V826M1213.5 820V824M1244.5 820V826M1276.5 820V824M1308.5 820V826M1339.5 820V824M1371.5 820V826M1402.5 820V824M1434.5 820V826M1466.5 820V824M1497.5 820V826M1529.5 820V824M1561.5 820V826M1592.5 820V824M1624.5 820V826M1656.5 820V824M1687.5 820V826M1719.5 820V824M1751.5 820V826M1782.5 820V824M1814.5 820V826M1846.5 820V824" stroke="#d8d8d8" stroke-width="1"/></svg>
<div class="a" style="left:369px;top:129px;width:10px;height:10px;background:linear-gradient(135deg,#9a9a9a 45%,#444 50%,#6a6a6a 55%);border:1px solid #333"></div>
<div class="a" style="left:1850px;top:129px;width:10px;height:10px;background:linear-gradient(45deg,#6a6a6a 45%,#444 50%,#9a9a9a 55%);border:1px solid #333"></div>
<div class="t" style="left:1877px;top:120px;font-size:9.5px;color:#d4dae8;">dB</div>
<div class="t" style="left:1877px;top:811px;font-size:9.5px;color:#d4dae8;">dB</div>
<div class="t" style="left:1878px;top:166px;font-size:9.2px;color:#d4dae8;">-3</div>
<div class="t" style="left:1878px;top:203px;font-size:9.2px;color:#d4dae8;">-6</div>
<div class="t" style="left:1878px;top:228px;font-size:9.2px;color:#d4dae8;">-9</div>
<div class="t" style="left:1878px;top:246px;font-size:9.2px;color:#d4dae8;">-12</div>
<div class="t" style="left:1878px;top:259px;font-size:9.2px;color:#d4dae8;">-15</div>
<div class="t" style="left:1878px;top:274px;font-size:9.2px;color:#d4dae8;">-21</div>
<div class="t" style="left:1878px;top:290px;font-size:9.2px;color:#d4dae8;">-<span style="letter-spacing:-1.2px">oo</span></div>
<div class="t" style="left:1878px;top:306px;font-size:9.2px;color:#d4dae8;">-21</div>
<div class="t" style="left:1878px;top:321px;font-size:9.2px;color:#d4dae8;">-15</div>
<div class="t" style="left:1878px;top:334px;font-size:9.2px;color:#d4dae8;">-12</div>
<div class="t" style="left:1878px;top:352px;font-size:9.2px;color:#d4dae8;">-9</div>
<div class="t" style="left:1878px;top:377px;font-size:9.2px;color:#d4dae8;">-6</div>
<div class="t" style="left:1878px;top:414px;font-size:9.2px;color:#d4dae8;">-3</div>
<div class="t" style="left:1878px;top:446px;font-size:9.2px;color:#d4dae8;">-1</div>
<div class="t" style="left:1878px;top:518px;font-size:9.2px;color:#d4dae8;">-3</div>
<div class="t" style="left:1878px;top:555px;font-size:9.2px;color:#d4dae8;">-6</div>
<div class="t" style="left:1878px;top:580px;font-size:9.2px;color:#d4dae8;">-9</div>
<div class="t" style="left:1878px;top:598px;font-size:9.2px;color:#d4dae8;">-12</div>
<div class="t" style="left:1878px;top:611px;font-size:9.2px;color:#d4dae8;">-15</div>
<div class="t" style="left:1878px;top:626px;font-size:9.2px;color:#d4dae8;">-21</div>
<div class="t" style="left:1878px;top:642px;font-size:9.2px;color:#d4dae8;">-<span style="letter-spacing:-1.2px">oo</span></div>
<div class="t" style="left:1878px;top:658px;font-size:9.2px;color:#d4dae8;">-21</div>
<div class="t" style="left:1878px;top:673px;font-size:9.2px;color:#d4dae8;">-15</div>
<div class="t" style="left:1878px;top:686px;font-size:9.2px;color:#d4dae8;">-12</div>
<div class="t" style="left:1878px;top:704px;font-size:9.2px;color:#d4dae8;">-9</div>
<div class="t" style="left:1878px;top:729px;font-size:9.2px;color:#d4dae8;">-6</div>
<div class="t" style="left:1878px;top:766px;font-size:9.2px;color:#d4dae8;">-3</div>
<div class="t" style="left:1878px;top:486px;font-size:9.2px;color:#d4dae8;">-1</div>
<div class="t" style="left:360px;top:826px;font-size:10px;color:#d4dae8;">hms</div>
<div class="t" style="left:1850px;top:826px;font-size:10px;color:#d4dae8;">hms</div>
<div class="t" style="left:391.7px;top:826px;width:60px;text-align:center;font-size:10px;color:#d4dae8">0:10</div>
<div class="t" style="left:455.0px;top:826px;width:60px;text-align:center;font-size:10px;color:#d4dae8">0:20</div>
<div class="t" style="left:518.4px;top:826px;width:60px;text-align:center;font-size:10px;color:#d4dae8">0:30</div>
<div class="t" style="left:581.7px;top:826px;width:60px;text-align:center;font-size:10px;color:#d4dae8">0:40</div>
<div class="t" style="left:645.0px;top:826px;width:60px;text-align:center;font-size:10px;color:#d4dae8">0:50</div>
<div class="t" style="left:708.3px;top:826px;width:60px;text-align:center;font-size:10px;color:#d4dae8">1:00</div>
<div class="t" style="left:771.6px;top:826px;width:60px;text-align:center;font-size:10px;color:#d4dae8">1:10</div>
<div class="t" style="left:835.0px;top:826px;width:60px;text-align:center;font-size:10px;color:#d4dae8">1:20</div>
<div class="t" style="left:898.3px;top:826px;width:60px;text-align:center;font-size:10px;color:#d4dae8">1:30</div>
<div class="t" style="left:961.6px;top:826px;width:60px;text-align:center;font-size:10px;color:#d4dae8">1:40</div>
<div class="t" style="left:1024.9px;top:826px;width:60px;text-align:center;font-size:10px;color:#d4dae8">1:50</div>
<div class="t" style="left:1088.2px;top:826px;width:60px;text-align:center;font-size:10px;color:#d4dae8">2:00</div>
<div class="t" style="left:1151.6px;top:826px;width:60px;text-align:center;font-size:10px;color:#d4dae8">2:10</div>
<div class="t" style="left:1214.9px;top:826px;width:60px;text-align:center;font-size:10px;color:#d4dae8">2:20</div>
<div class="t" style="left:1278.2px;top:826px;width:60px;text-align:center;font-size:10px;color:#d4dae8">2:30</div>
<div class="t" style="left:1341.5px;top:826px;width:60px;text-align:center;font-size:10px;color:#d4dae8">2:40</div>
<div class="t" style="left:1404.8px;top:826px;width:60px;text-align:center;font-size:10px;color:#d4dae8">2:50</div>
<div class="t" style="left:1468.2px;top:826px;width:60px;text-align:center;font-size:10px;color:#d4dae8">3:00</div>
<div class="t" style="left:1531.5px;top:826px;width:60px;text-align:center;font-size:10px;color:#d4dae8">3:10</div>
<div class="t" style="left:1594.8px;top:826px;width:60px;text-align:center;font-size:10px;color:#d4dae8">3:20</div>
<div class="t" style="left:1658.1px;top:826px;width:60px;text-align:center;font-size:10px;color:#d4dae8">3:30</div>
<div class="t" style="left:1721.4px;top:826px;width:60px;text-align:center;font-size:10px;color:#d4dae8">3:40</div>
<div class="t" style="left:1784.8px;top:826px;width:60px;text-align:center;font-size:10px;color:#d4dae8">3:50</div>
<div class="panel" style="left:2px;top:872px;width:312px;height:69px"></div>
<svg class="a" style="left:8px;top:856px" width="94" height="17"><defs><linearGradient id="tg8_856" x1="0" y1="0" x2="0" y2="1"><stop offset="0" stop-color="#c2c2c2"/><stop offset="1" stop-color="#a6a6a6"/></linearGradient></defs><path d="M0 17V5Q0 0 5 0H72Q78 0 83 8.5Q87 17 93 17Z" fill="url(#tg8_856)"/><path d="M0.5 17V5Q0.5 0.5 5 0.5H72Q78 0.5 83 8.5Q87 16.5 93 16.5" stroke="#d6d6d6" stroke-width="1" fill="none"/></svg>
<div class="grip" style="left:11px;top:859px"></div>
<div class="t" style="left:20px;top:860px;font-size:11px;color:#111;">Transport</div>
<svg class="a" style="left:74px;top:861px" width="8" height="8"><path d="M1 1L7 7M7 1L1 7" stroke="#000" stroke-width="1.6"/></svg>
<svg class="a" style="left:277px;top:855px" width="37" height="18"><path d="M0 18Q7 18 10 9.0Q13 0 22 0H37V18Z" fill="#b4b4b4"/><path d="M0 17.5Q7 17.5 10 9.0Q13 0.5 22 0.5H37" stroke="#d0d0d0" fill="none"/></svg>
<div class="grip" style="left:288px;top:859px;width:8px;height:6px;opacity:.8"></div>
<div class="pmenu" style="left:297px;top:857px"></div>
<div class="a" style="left:7px;top:878px;width:28px;height:25px;border:1px solid #8e8e8e;border-radius:4px;background:linear-gradient(#b6b6b6,#a2a2a2)"></div>
<svg class="a" style="left:9px;top:880px" width="24" height="22"><rect x="8" y="7" width="8" height="8" fill="#8a8a8a"/></svg>
<div class="a" style="left:37px;top:878px;width:28px;height:25px;border:1px solid #626262;border-radius:4px;background:linear-gradient(#b6b6b6,#a2a2a2)"></div>
<svg class="a" style="left:39px;top:880px" width="24" height="22"><path d="M10 6L16 11L10 16Z" fill="#333"/></svg>
<div class="a" style="left:67px;top:878px;width:28px;height:25px;border:1px solid #8e8e8e;border-radius:4px;background:linear-gradient(#b6b6b6,#a2a2a2)"></div>
<svg class="a" style="left:69px;top:880px" width="24" height="22"><rect x="8" y="7" width="2.5" height="8" fill="#888"/><rect x="13" y="7" width="2.5" height="8" fill="#888"/></svg>
<div class="a" style="left:97px;top:878px;width:28px;height:25px;border:1px solid #626262;border-radius:4px;background:linear-gradient(#b6b6b6,#a2a2a2)"></div>
<svg class="a" style="left:99px;top:880px" width="24" height="22"><circle cx="12" cy="11" r="6" fill="none" stroke="#333" stroke-width="1.3"/><path d="M11 7V15L16 11Z" fill="#333"/><rect x="9" y="7" width="1.4" height="8" fill="#333"/></svg>
<div class="a" style="left:127px;top:878px;width:28px;height:25px;border:1px solid #626262;border-radius:4px;background:linear-gradient(#b6b6b6,#a2a2a2)"></div>
<svg class="a" style="left:129px;top:880px" width="24" height="22"><path d="M5.5 9V15H18.5V12" stroke="#333" stroke-width="2.2" fill="none"/><path d="M6 8.5H13V5.5L18 9L13 12.5V10.5H7.5" fill="#333"/></svg>
<div class="a" style="left:157px;top:878px;width:28px;height:25px;border:1px solid #626262;border-radius:4px;background:linear-gradient(#b6b6b6,#a2a2a2)"></div>
<svg class="a" style="left:159px;top:880px" width="24" height="22"><rect x="7" y="7" width="2" height="8" fill="#333"/><path d="M16 7L10 11L16 15Z" fill="#333"/></svg>
<div class="a" style="left:187px;top:878px;width:28px;height:25px;border:1px solid #626262;border-radius:4px;background:linear-gradient(#b6b6b6,#a2a2a2)"></div>
<svg class="a" style="left:189px;top:880px" width="24" height="22"><path d="M12 7L7 11L12 15ZM17 7L12 11L17 15Z" fill="#333"/></svg>
<div class="a" style="left:217px;top:878px;width:28px;height:25px;border:1px solid #626262;border-radius:4px;background:linear-gradient(#b6b6b6,#a2a2a2)"></div>
<svg class="a" style="left:219px;top:880px" width="24" height="22"><path d="M7 7L12 11L7 15ZM12 7L17 11L12 15Z" fill="#333"/></svg>
<div class="a" style="left:247px;top:878px;width:28px;height:25px;border:1px solid #626262;border-radius:4px;background:linear-gradient(#b6b6b6,#a2a2a2)"></div>
<svg class="a" style="left:249px;top:880px" width="24" height="22"><path d="M8 7L14 11L8 15Z" fill="#333"/><rect x="15" y="7" width="2" height="8" fill="#333"/></svg>
<div class="a" style="left:277px;top:878px;width:28px;height:25px;border:1px solid #626262;border-radius:4px;background:linear-gradient(#b6b6b6,#a2a2a2)"></div>
<svg class="a" style="left:279px;top:880px" width="24" height="22"><circle cx="12" cy="11" r="4" fill="#d01818"/></svg>
<div class="panel" style="left:320px;top:872px;width:118px;height:69px"></div>
<svg class="a" style="left:326px;top:856px" width="70" height="17"><defs><linearGradient id="tg326_856" x1="0" y1="0" x2="0" y2="1"><stop offset="0" stop-color="#c2c2c2"/><stop offset="1" stop-color="#a6a6a6"/></linearGradient></defs><path d="M0 17V5Q0 0 5 0H48Q54 0 59 8.5Q63 17 69 17Z" fill="url(#tg326_856)"/><path d="M0.5 17V5Q0.5 0.5 5 0.5H48Q54 0.5 59 8.5Q63 16.5 69 16.5" stroke="#d6d6d6" stroke-width="1" fill="none"/></svg>
<div class="grip" style="left:329px;top:859px"></div>
<div class="t" style="left:338px;top:860px;font-size:11px;color:#111;">Time</div>
<svg class="a" style="left:369px;top:861px" width="8" height="8"><path d="M1 1L7 7M7 1L1 7" stroke="#000" stroke-width="1.6"/></svg>
<svg class="a" style="left:401px;top:855px" width="37" height="18"><path d="M0 18Q7 18 10 9.0Q13 0 22 0H37V18Z" fill="#b4b4b4"/><path d="M0 17.5Q7 17.5 10 9.0Q13 0.5 22 0.5H37" stroke="#d0d0d0" fill="none"/></svg>
<div class="grip" style="left:412px;top:859px;width:8px;height:6px;opacity:.8"></div>
<div class="pmenu" style="left:421px;top:857px"></div>
<div class="t" style="left:343px;top:897px;font-size:21px;color:#111;">0:00.000</div>
<div class="panel" style="left:444px;top:872px;width:255px;height:69px"></div>
<svg class="a" style="left:450px;top:856px" width="62" height="17"><defs><linearGradient id="tg450_856" x1="0" y1="0" x2="0" y2="1"><stop offset="0" stop-color="#c2c2c2"/><stop offset="1" stop-color="#a6a6a6"/></linearGradient></defs><path d="M0 17V5Q0 0 5 0H40Q46 0 51 8.5Q55 17 61 17Z" fill="url(#tg450_856)"/><path d="M0.5 17V5Q0.5 0.5 5 0.5H40Q46 0.5 51 8.5Q55 16.5 61 16.5" stroke="#d6d6d6" stroke-width="1" fill="none"/></svg>
<div class="grip" style="left:453px;top:859px"></div>
<div class="t" style="left:462px;top:860px;font-size:11px;color:#111;">Zoom</div>
<svg class="a" style="left:497px;top:861px" width="8" height="8"><path d="M1 1L7 7M7 1L1 7" stroke="#000" stroke-width="1.6"/></svg>
<svg class="a" style="left:662px;top:855px" width="37" height="18"><path d="M0 18Q7 18 10 9.0Q13 0 22 0H37V18Z" fill="#b4b4b4"/><path d="M0 17.5Q7 17.5 10 9.0Q13 0.5 22 0.5H37" stroke="#d0d0d0" fill="none"/></svg>
<div class="grip" style="left:673px;top:859px;width:8px;height:6px;opacity:.8"></div>
<div class="pmenu" style="left:682px;top:857px"></div>
<svg class="a" style="left:450px;top:879px" width="245" height="30"><path d="M4 5H21M4 5L7 3M4 5L7 7M21 5L18 3M21 5L18 7" stroke="#222" stroke-width="1"/><circle cx="12" cy="12.5" r="4.2" fill="#e8e8e8" stroke="#222" stroke-width="1.3"/><path d="M15 15.5L19 19.5" stroke="#222" stroke-width="2.2"/><path d="M9.5 12.5H14.5M12 10.0V15.0" stroke="#222" stroke-width="1.2"/><path d="M34 5H51" stroke="#8a8a8a" stroke-width="1"/><circle cx="42" cy="12.5" r="4.2" fill="#e8e8e8" stroke="#8a8a8a" stroke-width="1.3"/><path d="M45 15.5L49 19.5" stroke="#8a8a8a" stroke-width="2.2"/><path d="M39.5 12.5H44.5" stroke="#8a8a8a" stroke-width="1.2"/><circle cx="72" cy="12" r="4.2" fill="#e8e8e8" stroke="#222" stroke-width="1.3"/><path d="M75 15L79 19" stroke="#222" stroke-width="2.2"/><path d="M69.5 12H74.5" stroke="#222" stroke-width="1.2"/><path d="M72 4V6M72 19V21M63.5 12H65.5" stroke="#222"/><rect x="95.5" y="5.5" width="13" height="14" fill="#c4c4c4" stroke="#111" stroke-dasharray="1 1" shape-rendering="crispEdges"/><circle cx="102" cy="11" r="4.2" fill="#e8e8e8" stroke="#222" stroke-width="1.3"/><path d="M105 14L109 18" stroke="#222" stroke-width="2.2"/><rect x="131.5" y="5.5" width="11" height="14" fill="#c4c4c4" stroke="#111" stroke-dasharray="1 1" shape-rendering="crispEdges"/><circle cx="131" cy="11" r="4.2" fill="#e8e8e8" stroke="#222" stroke-width="1.3"/><path d="M134 14L138 18" stroke="#222" stroke-width="2.2"/><rect x="155.5" y="5.5" width="11" height="14" fill="#c4c4c4" stroke="#111" stroke-dasharray="1 1" shape-rendering="crispEdges"/><circle cx="165" cy="11" r="4.2" fill="#e8e8e8" stroke="#222" stroke-width="1.3"/><path d="M168 14L172 18" stroke="#222" stroke-width="2.2"/><path d="M181.5 0V26" stroke="#555"/><path d="M191 4V21M191 4L189 7M191 4L193 7M191 21L189 18M191 21L193 18" stroke="#222" stroke-width="1.2"/><circle cx="199" cy="11.5" r="4.2" fill="#e8e8e8" stroke="#222" stroke-width="1.3"/><path d="M202 14.5L206 18.5" stroke="#222" stroke-width="2.2"/><path d="M196.5 11.5H201.5M199 9.0V14.0" stroke="#222" stroke-width="1.2"/><path d="M221 4V21M221 4L219 7M221 4L223 7M221 21L219 18M221 21L223 18" stroke="#222" stroke-width="1.2"/><circle cx="229" cy="11.5" r="4.2" fill="#e8e8e8" stroke="#222" stroke-width="1.3"/><path d="M232 14.5L236 18.5" stroke="#222" stroke-width="2.2"/><path d="M226.5 11.5H231.5" stroke="#222" stroke-width="1.2"/></svg>
<div class="panel" style="left:705px;top:872px;width:1213px;height:69px"></div>
<svg class="a" style="left:711px;top:856px" width="118" height="17"><defs><linearGradient id="tg711_856" x1="0" y1="0" x2="0" y2="1"><stop offset="0" stop-color="#c2c2c2"/><stop offset="1" stop-color="#a6a6a6"/></linearGradient></defs><path d="M0 17V5Q0 0 5 0H96Q102 0 107 8.5Q111 17 117 17Z" fill="url(#tg711_856)"/><path d="M0.5 17V5Q0.5 0.5 5 0.5H96Q102 0.5 107 8.5Q111 16.5 117 16.5" stroke="#d6d6d6" stroke-width="1" fill="none"/></svg>
<div class="grip" style="left:714px;top:859px"></div>
<div class="t" style="left:723px;top:860px;font-size:11px;color:#111;">Selection/View</div>
<svg class="a" style="left:801px;top:861px" width="8" height="8"><path d="M1 1L7 7M7 1L1 7" stroke="#000" stroke-width="1.6"/></svg>
<svg class="a" style="left:1881px;top:855px" width="37" height="18"><path d="M0 18Q7 18 10 9.0Q13 0 22 0H37V18Z" fill="#b4b4b4"/><path d="M0 17.5Q7 17.5 10 9.0Q13 0.5 22 0.5H37" stroke="#d0d0d0" fill="none"/></svg>
<div class="grip" style="left:1892px;top:859px;width:8px;height:6px;opacity:.8"></div>
<div class="pmenu" style="left:1901px;top:857px"></div>
<div class="t" style="left:763px;top:877px;font-size:11px;color:#111;">Begin</div>
<div class="t" style="left:838px;top:877px;font-size:11px;color:#111;">End</div>
<div class="t" style="left:913px;top:877px;font-size:11px;color:#111;">Length</div>
<div class="t" style="left:710px;top:895px;font-size:11px;color:#111;">Selection</div>
<div class="t" style="left:730px;top:915px;font-size:11px;color:#111;">View</div>
<div class="ibox" style="left:758px;top:893px;width:72px;height:17px;padding-top:1px">0:00.000</div>
<div class="ibox" style="left:833px;top:893px;width:72px;height:17px;padding-top:1px"></div>
<div class="ibox" style="left:908px;top:893px;width:72px;height:17px;padding-top:1px">0:00.000</div>
<div class="ibox" style="left:758px;top:913px;width:72px;height:17px;padding-top:1px">0:00.000</div>
<div class="ibox" style="left:833px;top:913px;width:72px;height:17px;padding-top:1px">3:58.876</div>
<div class="ibox" style="left:908px;top:913px;width:72px;height:17px;padding-top:1px">3:58.876</div>
<div class="panel" style="left:2px;top:965px;width:1916px;height:52px"></div>
<svg class="a" style="left:8px;top:949px" width="83" height="17"><defs><linearGradient id="tg8_949" x1="0" y1="0" x2="0" y2="1"><stop offset="0" stop-color="#c2c2c2"/><stop offset="1" stop-color="#a6a6a6"/></linearGradient></defs><path d="M0 17V5Q0 0 5 0H61Q67 0 72 8.5Q76 17 82 17Z" fill="url(#tg8_949)"/><path d="M0.5 17V5Q0.5 0.5 5 0.5H61Q67 0.5 72 8.5Q76 16.5 82 16.5" stroke="#d6d6d6" stroke-width="1" fill="none"/></svg>
<div class="grip" style="left:11px;top:952px"></div>
<div class="t" style="left:20px;top:953px;font-size:11px;color:#111;">Levels</div>
<svg class="a" style="left:57px;top:954px" width="8" height="8"><path d="M1 1L7 7M7 1L1 7" stroke="#000" stroke-width="1.6"/></svg>
<svg class="a" style="left:1881px;top:948px" width="37" height="18"><path d="M0 18Q7 18 10 9.0Q13 0 22 0H37V18Z" fill="#b4b4b4"/><path d="M0 17.5Q7 17.5 10 9.0Q13 0.5 22 0.5H37" stroke="#d0d0d0" fill="none"/></svg>
<div class="grip" style="left:1892px;top:952px;width:8px;height:6px;opacity:.8"></div>
<div class="pmenu" style="left:1901px;top:950px"></div>
<div class="a" style="left:3px;top:968px;width:1902px;height:30px;background:#000"></div>
<div class="a" style="left:6px;top:970px;width:1px;height:12px;background:#ffe000"></div>
<div class="a" style="left:6px;top:984px;width:1px;height:12px;background:#ffe000"></div>
<div class="a" style="left:1905px;top:968px;width:11px;height:30px;border:1px solid #e8e8e8;background:#000"></div>
<div class="a" style="left:1906px;top:982px;width:9px;height:2px;background:#e8e8e8"></div>
<svg class="a" style="left:0;top:997px" width="1920" height="8" shape-rendering="crispEdges"><path d="M4 0.5H4M1903.5 0V5M1899.5 1V3M1894.5 1V3M1890.5 1V3M1885.5 1V3M1881.5 1V3M1877.5 0V5M1872.5 1V3M1868.5 1V3M1863.5 1V3M1859.5 1V3M1855.5 1V3M1850.5 0V5M1846.5 1V3M1842.5 1V3M1837.5 1V3M1833.5 1V3M1828.5 1V3M1824.5 0V5M1820.5 1V3M1815.5 1V3M1811.5 1V3M1806.5 1V3M1802.5 1V3M1798.5 0V5M1793.5 1V3M1789.5 1V3M1784.5 1V3M1780.5 1V3M1776.5 1V3M1771.5 0V5M1767.5 1V3M1762.5 1V3M1758.5 1V3M1754.5 1V3M1749.5 1V3M1745.5 0V5M1741.5 1V3M1736.5 1V3M1732.5 1V3M1727.5 1V3M1723.5 1V3M1719.5 0V5M1714.5 1V3M1710.5 1V3M1705.5 1V3M1701.5 1V3M1697.5 1V3M1692.5 0V5M1688.5 1V3M1683.5 1V3M1679.5 1V3M1675.5 1V3M1670.5 1V3M1666.5 0V5M1661.5 1V3M1657.5 1V3M1653.5 1V3M1648.5 1V3M1644.5 1V3M1640.5 0V5M1635.5 1V3M1631.5 1V3M1626.5 1V3M1622.5 1V3M1618.5 1V3M1613.5 0V5M1609.5 1V3M1604.5 1V3M1600.5 1V3M1596.5 1V3M1591.5 1V3M1587.5 0V5M1582.5 1V3M1578.5 1V3M1574.5 1V3M1569.5 1V3M1565.5 1V3M1560.5 0V5M1556.5 1V3M1552.5 1V3M1547.5 1V3M1543.5 1V3M1538.5 1V3M1534.5 0V5M1530.5 1V3M1525.5 1V3M1521.5 1V3M1517.5 1V3M1512.5 1V3M1508.5 0V5M1503.5 1V3M1499.5 1V3M1495.5 1V3M1490.5 1V3M1486.5 1V3M1481.5 0V5M1477.5 1V3M1473.5 1V3M1468.5 1V3M1464.5 1V3M1459.5 1V3M1455.5 0V5M1451.5 1V3M1446.5 1V3M1442.5 1V3M1437.5 1V3M1433.5 1V3M1429.5 0V5M1424.5 1V3M1420.5 1V3M1416.5 1V3M1411.5 1V3M1407.5 1V3M1402.5 0V5M1398.5 1V3M1394.5 1V3M1389.5 1V3M1385.5 1V3M1380.5 1V3M1376.5 0V5M1372.5 1V3M1367.5 1V3M1363.5 1V3M1358.5 1V3M1354.5 1V3M1350.5 0V5M1345.5 1V3M1341.5 1V3M1336.5 1V3M1332.5 1V3M1328.5 1V3M1323.5 0V5M1319.5 1V3M1315.5 1V3M1310.5 1V3M1306.5 1V3M1301.5 1V3M1297.5 0V5M1293.5 1V3M1288.5 1V3M1284.5 1V3M1279.5 1V3M1275.5 1V3M1271.5 0V5M1266.5 1V3M1262.5 1V3M1257.5 1V3M1253.5 1V3M1249.5 1V3M1244.5 0V5M1240.5 1V3M1235.5 1V3M1231.5 1V3M1227.5 1V3M1222.5 1V3M1218.5 0V5M1214.5 1V3M1209.5 1V3M1205.5 1V3M1200.5 1V3M1196.5 1V3M1192.5 0V5M1187.5 1V3M1183.5 1V3M1178.5 1V3M1174.5 1V3M1170.5 1V3M1165.5 0V5M1161.5 1V3M1156.5 1V3M1152.5 1V3M1148.5 1V3M1143.5 1V3M1139.5 0V5M1134.5 1V3M1130.5 1V3M1126.5 1V3M1121.5 1V3M1117.5 1V3M1112.5 0V5M1108.5 1V3M1104.5 1V3M1099.5 1V3M1095.5 1V3M1091.5 1V3M1086.5 0V5M1082.5 1V3M1077.5 1V3M1073.5 1V3M1069.5 1V3M1064.5 1V3M1060.5 0V5M1055.5 1V3M1051.5 1V3M1047.5 1V3M1042.5 1V3M1038.5 1V3M1033.5 0V5M1029.5 1V3M1025.5 1V3M1020.5 1V3M1016.5 1V3M1011.5 1V3M1007.5 0V5M1003.5 1V3M998.5 1V3M994.5 1V3M990.5 1V3M985.5 1V3M981.5 0V5M976.5 1V3M972.5 1V3M968.5 1V3M963.5 1V3M959.5 1V3M954.5 0V5M950.5 1V3M946.5 1V3M941.5 1V3M937.5 1V3M932.5 1V3M928.5 0V5M924.5 1V3M919.5 1V3M915.5 1V3M910.5 1V3M906.5 1V3M902.5 0V5M897.5 1V3M893.5 1V3M889.5 1V3M884.5 1V3M880.5 1V3M875.5 0V5M871.5 1V3M867.5 1V3M862.5 1V3M858.5 1V3M853.5 1V3M849.5 0V5M845.5 1V3M840.5 1V3M836.5 1V3M831.5 1V3M827.5 1V3M823.5 0V5M818.5 1V3M814.5 1V3M809.5 1V3M805.5 1V3M801.5 1V3M796.5 0V5M792.5 1V3M788.5 1V3M783.5 1V3M779.5 1V3M774.5 1V3M770.5 0V5M766.5 1V3M761.5 1V3M757.5 1V3M752.5 1V3M748.5 1V3M744.5 0V5M739.5 1V3M735.5 1V3M730.5 1V3M726.5 1V3M722.5 1V3M717.5 0V5M713.5 1V3M708.5 1V3M704.5 1V3M700.5 1V3M695.5 1V3M691.5 0V5M687.5 1V3M682.5 1V3M678.5 1V3M673.5 1V3M669.5 1V3M665.5 0V5M660.5 1V3M656.5 1V3M651.5 1V3M647.5 1V3M643.5 1V3M638.5 0V5M634.5 1V3M629.5 1V3M625.5 1V3M621.5 1V3M616.5 1V3M612.5 0V5M607.5 1V3M603.5 1V3M599.5 1V3M594.5 1V3M590.5 1V3M586.5 0V5M581.5 1V3M577.5 1V3M572.5 1V3M568.5 1V3M564.5 1V3M559.5 0V5M555.5 1V3M550.5 1V3M546.5 1V3M542.5 1V3M537.5 1V3M533.5 0V5M528.5 1V3M524.5 1V3M520.5 1V3M515.5 1V3M511.5 1V3M506.5 0V5M502.5 1V3M498.5 1V3M493.5 1V3M489.5 1V3M484.5 1V3M480.5 0V5M476.5 1V3M471.5 1V3M467.5 1V3M463.5 1V3M458.5 1V3M454.5 0V5M449.5 1V3M445.5 1V3M441.5 1V3M436.5 1V3M432.5 1V3M427.5 0V5M423.5 1V3M419.5 1V3M414.5 1V3M410.5 1V3M405.5 1V3M401.5 0V5M397.5 1V3M392.5 1V3M388.5 1V3M383.5 1V3M379.5 1V3M375.5 0V5M370.5 1V3M366.5 1V3M362.5 1V3M357.5 1V3M353.5 1V3M348.5 0V5M344.5 1V3M340.5 1V3M335.5 1V3M331.5 1V3M326.5 1V3M322.5 0V5M318.5 1V3M313.5 1V3M309.5 1V3M304.5 1V3M300.5 1V3M296.5 0V5M291.5 1V3M287.5 1V3M282.5 1V3M278.5 1V3M274.5 1V3M269.5 0V5M265.5 1V3M261.5 1V3M256.5 1V3M252.5 1V3M247.5 1V3M243.5 0V5M239.5 1V3M234.5 1V3M230.5 1V3M225.5 1V3M221.5 1V3M217.5 0V5M212.5 1V3M208.5 1V3M203.5 1V3M199.5 1V3M195.5 1V3M190.5 0V5M186.5 1V3M181.5 1V3M177.5 1V3M173.5 1V3M168.5 1V3M164.5 0V5M160.5 1V3M155.5 1V3M151.5 1V3M146.5 1V3M142.5 1V3M138.5 0V5M133.5 1V3M129.5 1V3M124.5 1V3M120.5 1V3M116.5 1V3M111.5 0V5M107.5 1V3M102.5 1V3M98.5 1V3M94.5 1V3M89.5 1V3M85.5 0V5M80.5 1V3M76.5 1V3M72.5 1V3M67.5 1V3M63.5 1V3M58.5 0V5M54.5 1V3M50.5 1V3M45.5 1V3M41.5 1V3M37.5 1V3M32.5 0V5M28.5 1V3M23.5 1V3M19.5 1V3M15.5 1V3M10.5 1V3M6.5 0V5" stroke="#1a1a1a" stroke-width="1"/></svg>
<div class="t" style="left:5px;top:1003px;font-size:10px;color:#111;">dB</div>
<div class="t" style="left:17.1px;top:1003px;width:30px;text-align:center;font-size:10px;color:#111">-71</div>
<div class="t" style="left:43.5px;top:1003px;width:30px;text-align:center;font-size:10px;color:#111">-70</div>
<div class="t" style="left:69.8px;top:1003px;width:30px;text-align:center;font-size:10px;color:#111">-69</div>
<div class="t" style="left:96.2px;top:1003px;width:30px;text-align:center;font-size:10px;color:#111">-68</div>
<div class="t" style="left:122.5px;top:1003px;width:30px;text-align:center;font-size:10px;color:#111">-67</div>
<div class="t" style="left:148.9px;top:1003px;width:30px;text-align:center;font-size:10px;color:#111">-66</div>
<div class="t" style="left:175.2px;top:1003px;width:30px;text-align:center;font-size:10px;color:#111">-65</div>
<div class="t" style="left:201.6px;top:1003px;width:30px;text-align:center;font-size:10px;color:#111">-64</div>
<div class="t" style="left:227.9px;top:1003px;width:30px;text-align:center;font-size:10px;color:#111">-63</div>
<div class="t" style="left:254.3px;top:1003px;width:30px;text-align:center;font-size:10px;color:#111">-62</div>
<div class="t" style="left:280.6px;top:1003px;width:30px;text-align:center;font-size:10px;color:#111">-61</div>
<div class="t" style="left:307.0px;top:1003px;width:30px;text-align:center;font-size:10px;color:#111">-60</div>
<div class="t" style="left:333.3px;top:1003px;width:30px;text-align:center;font-size:10px;color:#111">-59</div>
<div class="t" style="left:359.7px;top:1003px;width:30px;text-align:center;font-size:10px;color:#111">-58</div>
<div class="t" style="left:386.0px;top:1003px;width:30px;text-align:center;font-size:10px;color:#111">-57</div>
<div class="t" style="left:412.4px;top:1003px;width:30px;text-align:center;font-size:10px;color:#111">-56</div>
<div class="t" style="left:438.8px;top:1003px;width:30px;text-align:center;font-size:10px;color:#111">-55</div>
<div class="t" style="left:465.1px;top:1003px;width:30px;text-align:center;font-size:10px;color:#111">-54</div>
<div class="t" style="left:491.4px;top:1003px;width:30px;text-align:center;font-size:10px;color:#111">-53</div>
<div class="t" style="left:517.8px;top:1003px;width:30px;text-align:center;font-size:10px;color:#111">-52</div>
<div class="t" style="left:544.1px;top:1003px;width:30px;text-align:center;font-size:10px;color:#111">-51</div>
<div class="t" style="left:570.5px;top:1003px;width:30px;text-align:center;font-size:10px;color:#111">-50</div>
<div class="t" style="left:596.8px;top:1003px;width:30px;text-align:center;font-size:10px;color:#111">-49</div>
<div class="t" style="left:623.2px;top:1003px;width:30px;text-align:center;font-size:10px;color:#111">-48</div>
<div class="t" style="left:649.5px;top:1003px;width:30px;text-align:center;font-size:10px;color:#111">-47</div>
<div class="t" style="left:675.9px;top:1003px;width:30px;text-align:center;font-size:10px;color:#111">-46</div>
<div class="t" style="left:702.2px;top:1003px;width:30px;text-align:center;font-size:10px;color:#111">-45</div>
<div class="t" style="left:728.6px;top:1003px;width:30px;text-align:center;font-size:10px;color:#111">-44</div>
<div class="t" style="left:755.0px;top:1003px;width:30px;text-align:center;font-size:10px;color:#111">-43</div>
<div class="t" style="left:781.3px;top:1003px;width:30px;text-align:center;font-size:10px;color:#111">-42</div>
<div class="t" style="left:807.6px;top:1003px;width:30px;text-align:center;font-size:10px;color:#111">-41</div>
<div class="t" style="left:834.0px;top:1003px;width:30px;text-align:center;font-size:10px;color:#111">-40</div>
<div class="t" style="left:860.3px;top:1003px;width:30px;text-align:center;font-size:10px;color:#111">-39</div>
<div class="t" style="left:886.7px;top:1003px;width:30px;text-align:center;font-size:10px;color:#111">-38</div>
<div class="t" style="left:913.0px;top:1003px;width:30px;text-align:center;font-size:10px;color:#111">-37</div>
<div class="t" style="left:939.4px;top:1003px;width:30px;text-align:center;font-size:10px;color:#111">-36</div>
<div class="t" style="left:965.8px;top:1003px;width:30px;text-align:center;font-size:10px;color:#111">-35</div>
<div class="t" style="left:992.1px;top:1003px;width:30px;text-align:center;font-size:10px;color:#111">-34</div>
<div class="t" style="left:1018.4px;top:1003px;width:30px;text-align:center;font-size:10px;color:#111">-33</div>
<div class="t" style="left:1044.8px;top:1003px;width:30px;text-align:center;font-size:10px;color:#111">-32</div>
<div class="t" style="left:1071.2px;top:1003px;width:30px;text-align:center;font-size:10px;color:#111">-31</div>
<div class="t" style="left:1097.5px;top:1003px;width:30px;text-align:center;font-size:10px;color:#111">-30</div>
<div class="t" style="left:1123.8px;top:1003px;width:30px;text-align:center;font-size:10px;color:#111">-29</div>
<div class="t" style="left:1150.2px;top:1003px;width:30px;text-align:center;font-size:10px;color:#111">-28</div>
<div class="t" style="left:1176.5px;top:1003px;width:30px;text-align:center;font-size:10px;color:#111">-27</div>
<div class="t" style="left:1202.9px;top:1003px;width:30px;text-align:center;font-size:10px;color:#111">-26</div>
<div class="t" style="left:1229.2px;top:1003px;width:30px;text-align:center;font-size:10px;color:#111">-25</div>
<div class="t" style="left:1255.6px;top:1003px;width:30px;text-align:center;font-size:10px;color:#111">-24</div>
<div class="t" style="left:1281.9px;top:1003px;width:30px;text-align:center;font-size:10px;color:#111">-23</div>
<div class="t" style="left:1308.3px;top:1003px;width:30px;text-align:center;font-size:10px;color:#111">-22</div>
<div class="t" style="left:1334.7px;top:1003px;width:30px;text-align:center;font-size:10px;color:#111">-21</div>
<div class="t" style="left:1361.0px;top:1003px;width:30px;text-align:center;font-size:10px;color:#111">-20</div>
<div class="t" style="left:1387.3px;top:1003px;width:30px;text-align:center;font-size:10px;color:#111">-19</div>
<div class="t" style="left:1413.7px;top:1003px;width:30px;text-align:center;font-size:10px;color:#111">-18</div>
<div class="t" style="left:1440.0px;top:1003px;width:30px;text-align:center;font-size:10px;color:#111">-17</div>
<div class="t" style="left:1466.4px;top:1003px;width:30px;text-align:center;font-size:10px;color:#111">-16</div>
<div class="t" style="left:1492.8px;top:1003px;width:30px;text-align:center;font-size:10px;color:#111">-15</div>
<div class="t" style="left:1519.1px;top:1003px;width:30px;text-align:center;font-size:10px;color:#111">-14</div>
<div class="t" style="left:1545.5px;top:1003px;width:30px;text-align:center;font-size:10px;color:#111">-13</div>
<div class="t" style="left:1571.8px;top:1003px;width:30px;text-align:center;font-size:10px;color:#111">-12</div>
<div class="t" style="left:1598.2px;top:1003px;width:30px;text-align:center;font-size:10px;color:#111">-11</div>
<div class="t" style="left:1624.5px;top:1003px;width:30px;text-align:center;font-size:10px;color:#111">-10</div>
<div class="t" style="left:1650.8px;top:1003px;width:30px;text-align:center;font-size:10px;color:#111">-9</div>
<div class="t" style="left:1677.2px;top:1003px;width:30px;text-align:center;font-size:10px;color:#111">-8</div>
<div class="t" style="left:1703.5px;top:1003px;width:30px;text-align:center;font-size:10px;color:#111">-7</div>
<div class="t" style="left:1729.9px;top:1003px;width:30px;text-align:center;font-size:10px;color:#111">-6</div>
<div class="t" style="left:1756.2px;top:1003px;width:30px;text-align:center;font-size:10px;color:#111">-5</div>
<div class="t" style="left:1782.6px;top:1003px;width:30px;text-align:center;font-size:10px;color:#111">-4</div>
<div class="t" style="left:1809.0px;top:1003px;width:30px;text-align:center;font-size:10px;color:#111">-3</div>
<div class="t" style="left:1835.3px;top:1003px;width:30px;text-align:center;font-size:10px;color:#111">-2</div>
<div class="t" style="left:1861.7px;top:1003px;width:30px;text-align:center;font-size:10px;color:#111">-1</div>
<div class="t" style="left:1888.0px;top:1003px;width:30px;text-align:center;font-size:10px;color:#111">0</div>
<div class="a" style="left:0;top:1018px;width:1920px;height:22px;background:linear-gradient(#ececec 0,#d2d2d2 50%,#c4c4c4 100%);border-top:1px solid #8a8a8a"></div>
<div class="t" style="left:6px;top:1023px;font-size:11px;color:#111;">Opened in 38.32 seconds</div>
<div class="a" style="left:1321px;top:1020px;width:1px;height:20px;background:#9a9a9a;box-shadow:1px 0 0 #f4f4f4"></div>
<div class="a" style="left:1454px;top:1020px;width:1px;height:20px;background:#9a9a9a;box-shadow:1px 0 0 #f4f4f4"></div>
<div class="a" style="left:1531px;top:1020px;width:1px;height:20px;background:#9a9a9a;box-shadow:1px 0 0 #f4f4f4"></div>
<div class="a" style="left:1628px;top:1020px;width:1px;height:20px;background:#9a9a9a;box-shadow:1px 0 0 #f4f4f4"></div>
<div class="a" style="left:1733px;top:1020px;width:1px;height:20px;background:#9a9a9a;box-shadow:1px 0 0 #f4f4f4"></div>
<div class="a" style="left:1807px;top:1020px;width:1px;height:20px;background:#9a9a9a;box-shadow:1px 0 0 #f4f4f4"></div>
<div class="t" style="left:1328px;top:1023px;font-size:11.3px;color:#111;">96000 &#8226; 32-bit &#8226; Stereo</div>
<div class="t" style="left:1462px;top:1023px;font-size:11px;color:#111;">174.95 MB</div>
<div class="t" style="left:1539px;top:1023px;font-size:11px;color:#111;">164.48 GB free</div>
<div class="t" style="left:1636px;top:1023px;font-size:11px;color:#111;">63:52:44.93 free</div>
<div class="t" style="left:1815px;top:1023px;font-size:11px;color:#111;">Waveform</div>
</body></html>
